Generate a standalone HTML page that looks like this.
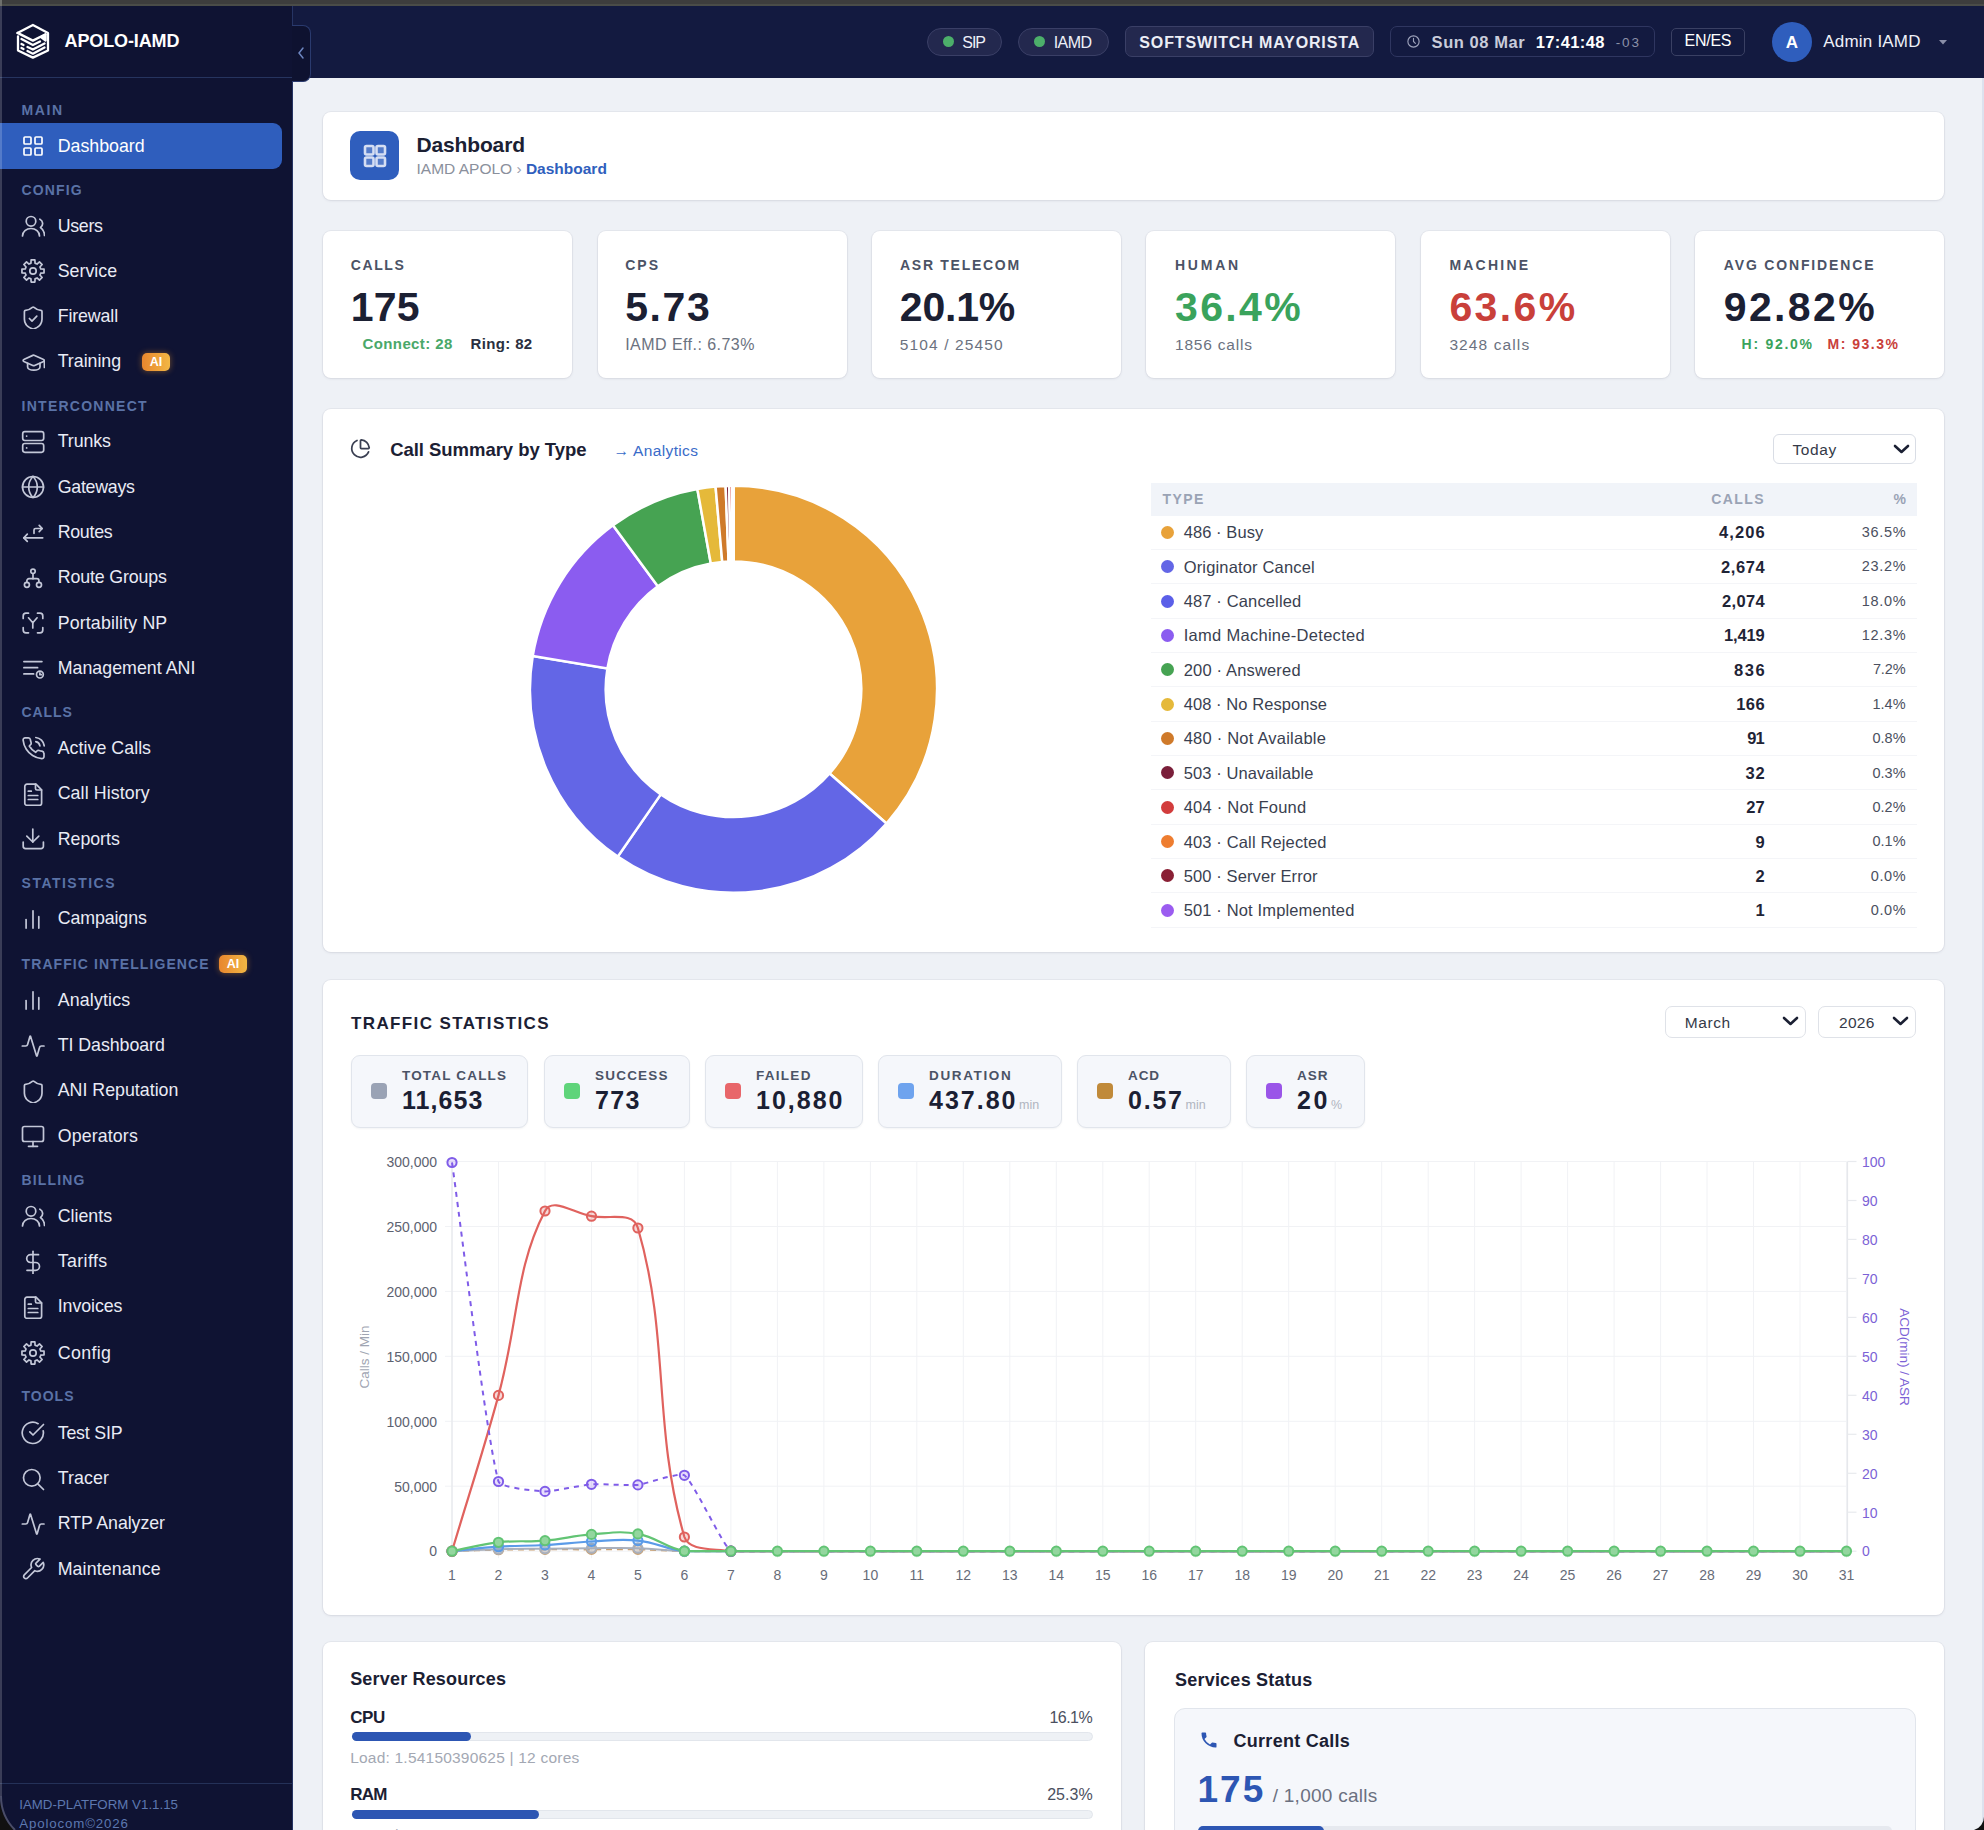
<!DOCTYPE html><html><head><meta charset="utf-8"><style>
*{margin:0;padding:0;box-sizing:border-box}
html,body{width:1984px;height:1830px;overflow:hidden;background:#eef1f6;font-family:"Liberation Sans",sans-serif}
.t{position:absolute;line-height:1;white-space:nowrap}
.r{position:absolute}
.card{position:absolute;background:#fff;border-radius:10px;box-shadow:0 1px 3px rgba(20,30,60,.08),0 0 0 1px rgba(20,30,60,.04)}
</style></head><body>

<div class="r" style="left:0px;top:0px;width:1984px;height:78px;background:#131a40"></div>
<div class="r" style="left:0px;top:0px;width:293px;height:1830px;background:#0f1333;border-right:1px solid #263463"></div>
<div class="r" style="left:0px;top:77px;width:292px;height:1px;background:#26345f"></div>
<svg class="r" style="left:12px;top:20px" width="42" height="42" viewBox="0 0 42 42" fill="none" stroke="#fff" stroke-width="2.3" stroke-linecap="round" stroke-linejoin="round"><path d="M5.5 12.9L20.9 5L36 12.9V30.5L20.9 37.6L6 30.5V16.5"/><path d="M5.5 12.9L20.9 20.6L33.5 14.2"/><path d="M9.5 19L20.9 25L28 21.5"/><path d="M15.5 27L20.9 29.5L32.5 23.5"/><path d="M15.5 31L20.9 33.7L32.5 27.5"/><path d="M9.5 24L11.5 25"/><path d="M9.5 28L11.5 29"/><path d="M29 17.2L33.6 14.6V20.6Z" fill="#fff"/></svg>
<div class="t" style="left:64.5px;top:32.0px;font-size:18px;font-weight:700;color:#ffffff;letter-spacing:-0.11px;">APOLO-IAMD</div>
<div class="r" style="left:292px;top:25px;width:19px;height:57px;background:#0e1230;border:1px solid #2a3a6e;border-left:none;border-radius:0 8px 8px 0"></div>
<svg class="r" style="left:296px;top:46px" width="10" height="14" viewBox="0 0 10 14" fill="none" stroke="#6d86c0" stroke-width="1.5" stroke-linecap="round"><path d="M7 2L3 7l4 5"/></svg>
<div class="t" style="left:21.6px;top:103.3px;font-size:14px;font-weight:700;color:#5a72a6;letter-spacing:1.54px;">MAIN</div>
<div class="r" style="left:0px;top:123px;width:282px;height:46px;background:#2f5ebd;border-radius:0 9px 9px 0"></div>
<svg class="r" style="left:21px;top:134px;" width="24" height="24" viewBox="0 0 24 24" fill="none" stroke="#ffffff" stroke-width="1.7" stroke-linecap="round" stroke-linejoin="round"><rect x="3" y="3" width="7" height="7" rx="1"/><rect x="14" y="3" width="7" height="7" rx="1"/><rect x="14" y="14" width="7" height="7" rx="1"/><rect x="3" y="14" width="7" height="7" rx="1"/></svg>
<div class="t" style="left:57.7px;top:137.7px;font-size:17.8px;font-weight:400;color:#ffffff;letter-spacing:-0.01px;">Dashboard</div>
<div class="t" style="left:21.6px;top:183.3px;font-size:14px;font-weight:700;color:#5a72a6;letter-spacing:1.11px;">CONFIG</div>
<svg class="r" style="left:21px;top:214px;" width="24" height="24" viewBox="0 0 24 24" fill="none" stroke="#c3c7d8" stroke-width="1.7" stroke-linecap="round" stroke-linejoin="round"><path d="M18.5 22a8.5 7.5 0 0 0-17 0"/><circle cx="10" cy="7.3" r="4.8"/><path d="M23.5 21.5c0-3.37-2-6.5-4-8a4.8 4.8 0 0 0-.6-8.3"/></svg>
<div class="t" style="left:57.7px;top:217.7px;font-size:17.8px;font-weight:400;color:#e9ebf5;letter-spacing:-0.30px;">Users</div>
<svg class="r" style="left:21px;top:259px;" width="24" height="24" viewBox="0 0 24 24" fill="none" stroke="#c3c7d8" stroke-width="1.7" stroke-linecap="round" stroke-linejoin="round"><path d="M8.94 4.61 L9.94 4.27 L10.11 0.96 L13.89 0.96 L14.06 4.27 L15.06 4.61 L16.01 5.08 L18.47 2.85 L21.15 5.53 L18.92 7.99 L19.39 8.94 L19.73 9.94 L23.04 10.11 L23.04 13.89 L19.73 14.06 L19.39 15.06 L18.92 16.01 L21.15 18.47 L18.47 21.15 L16.01 18.92 L15.06 19.39 L14.06 19.73 L13.89 23.04 L10.11 23.04 L9.94 19.73 L8.94 19.39 L7.99 18.92 L5.53 21.15 L2.85 18.47 L5.08 16.01 L4.61 15.06 L4.27 14.06 L0.96 13.89 L0.96 10.11 L4.27 9.94 L4.61 8.94 L5.08 7.99 L2.85 5.53 L5.53 2.85 L7.99 5.08Z"/><circle cx="12" cy="12" r="3.2"/></svg>
<div class="t" style="left:57.7px;top:262.7px;font-size:17.8px;font-weight:400;color:#e9ebf5;letter-spacing:0.02px;">Service</div>
<svg class="r" style="left:21px;top:304.5px;" width="24" height="24" viewBox="0 0 24 24" fill="none" stroke="#c3c7d8" stroke-width="1.7" stroke-linecap="round" stroke-linejoin="round"><path d="M21 14.2c0 5.5-3.85 8.25-8.43 9.85a1.1 1.1 0 0 1-.74-.01C7.25 22.45 3.4 19.7 3.4 14.2V6.5a1.1 1.1 0 0 1 1.1-1.1c2.2 0 4.95-1.32 6.86-3a1.29 1.29 0 0 1 1.67 0C14.96 4.1 17.7 5.4 19.9 5.4a1.1 1.1 0 0 1 1.1 1.1z"/><path d="M8.4 13.5l2.6 2.6 4.8-4.9"/></svg>
<div class="t" style="left:57.7px;top:308.2px;font-size:17.8px;font-weight:400;color:#e9ebf5;letter-spacing:-0.12px;">Firewall</div>
<svg class="r" style="left:21px;top:349.5px;" width="24" height="24" viewBox="0 0 24 24" fill="none" stroke="#c3c7d8" stroke-width="1.7" stroke-linecap="round" stroke-linejoin="round"><path d="M22.6 11.5a1 1 0 0 0-.02-1.9L13.6 5.4a2.2 2.2 0 0 0-1.8 0L2.8 9.5a1 1 0 0 0 0 1.9l9 4.1a2.2 2.2 0 0 0 1.8 0z"/><path d="M23.4 10.8v6.6"/><path d="M6.6 13.3v3.7a6.2 3.2 0 0 0 12.4 0v-3.7"/></svg>
<div class="t" style="left:57.7px;top:353.2px;font-size:17.8px;font-weight:400;color:#e9ebf5;letter-spacing:-0.02px;">Training</div>
<div class="r" style="left:142px;top:353px;width:28px;height:18px;border-radius:5px;background:linear-gradient(90deg,#e8862e,#f2b744);box-shadow:0 0 6px rgba(240,150,40,.45)"></div>
<div class="t" style="left:156.0px;top:356.0px;font-size:12.5px;font-weight:700;color:#ffffff;transform:translateX(-50%);">AI</div>
<div class="t" style="left:21.6px;top:399.3px;font-size:14px;font-weight:700;color:#5a72a6;letter-spacing:1.25px;">INTERCONNECT</div>
<svg class="r" style="left:21px;top:429.5px;" width="24" height="24" viewBox="0 0 24 24" fill="none" stroke="#c3c7d8" stroke-width="1.7" stroke-linecap="round" stroke-linejoin="round"><rect x="1.7" y="1.7" width="21" height="8.8" rx="2.2"/><rect x="1.7" y="13.5" width="21" height="8.8" rx="2.2"/><path d="M5.6 6.1h.1"/><path d="M5.6 17.9h.1"/></svg>
<div class="t" style="left:57.7px;top:433.2px;font-size:17.8px;font-weight:400;color:#e9ebf5;letter-spacing:-0.09px;">Trunks</div>
<svg class="r" style="left:21px;top:475px;" width="24" height="24" viewBox="0 0 24 24" fill="none" stroke="#c3c7d8" stroke-width="1.7" stroke-linecap="round" stroke-linejoin="round"><circle cx="12" cy="12" r="10.5"/><path d="M12 1.5a15 15 0 0 0 0 21a15 15 0 0 0 0-21"/><path d="M1.5 12h21"/></svg>
<div class="t" style="left:57.7px;top:478.7px;font-size:17.8px;font-weight:400;color:#e9ebf5;letter-spacing:-0.26px;">Gateways</div>
<svg class="r" style="left:21px;top:520px;" width="24" height="24" viewBox="0 0 24 24" fill="none" stroke="#c3c7d8" stroke-width="1.7" stroke-linecap="round" stroke-linejoin="round"><path d="M2.8 17.8h18.9"/><path d="M6.3 14.2l-3.5 3.6l3.5 3.6"/><path d="M13 13.3v-3.2a1.6 1.6 0 0 1 1.6-1.6h6.5"/><path d="M18.2 5.3l3 3.2l-3 3.2"/></svg>
<div class="t" style="left:57.7px;top:523.7px;font-size:17.8px;font-weight:400;color:#e9ebf5;letter-spacing:-0.28px;">Routes</div>
<svg class="r" style="left:21px;top:565.5px;" width="24" height="24" viewBox="0 0 24 24" fill="none" stroke="#c3c7d8" stroke-width="1.7" stroke-linecap="round" stroke-linejoin="round"><circle cx="12" cy="5.3" r="2.2"/><path d="M12 7.5v5.2"/><path d="M5.9 16.3v-1.6a2 2 0 0 1 2-2h8a2 2 0 0 1 2 2v1.6"/><circle cx="5.9" cy="18.8" r="2.5"/><circle cx="18" cy="18.8" r="2.5"/></svg>
<div class="t" style="left:57.7px;top:569.2px;font-size:17.8px;font-weight:400;color:#e9ebf5;letter-spacing:-0.14px;">Route Groups</div>
<svg class="r" style="left:21px;top:611px;" width="24" height="24" viewBox="0 0 24 24" fill="none" stroke="#c3c7d8" stroke-width="1.7" stroke-linecap="round" stroke-linejoin="round"><path d="M2.2 7.5V5a2.8 2.8 0 0 1 2.8-2.8h2.5"/><path d="M2.2 16.5V19A2.8 2.8 0 0 0 5 21.8h2.5"/><path d="M16.5 2.2H19A2.8 2.8 0 0 1 21.8 5v2.5"/><path d="M16.5 21.8H19a2.8 2.8 0 0 0 2.8-2.8v-2.5"/><path d="M7.5 6.8l4.3 5l4.3-5"/><path d="M11.8 11.8V17"/></svg>
<div class="t" style="left:57.7px;top:614.7px;font-size:17.8px;font-weight:400;color:#e9ebf5;letter-spacing:0.14px;">Portability NP</div>
<svg class="r" style="left:21px;top:656px;" width="24" height="24" viewBox="0 0 24 24" fill="none" stroke="#c3c7d8" stroke-width="1.7" stroke-linecap="round" stroke-linejoin="round"><path d="M2.9 5.6h18"/><path d="M2.9 11.7h13.7"/><path d="M2.9 17.9h9.7"/><circle cx="18.9" cy="18.6" r="3.4"/><path d="M18.9 16.9v1.8h1.4"/></svg>
<div class="t" style="left:57.7px;top:659.7px;font-size:17.8px;font-weight:400;color:#e9ebf5;letter-spacing:0.02px;">Management ANI</div>
<div class="t" style="left:21.6px;top:705.3px;font-size:14px;font-weight:700;color:#5a72a6;letter-spacing:0.88px;">CALLS</div>
<svg class="r" style="left:21px;top:736px;" width="24" height="24" viewBox="0 0 24 24" fill="none" stroke="#c3c7d8" stroke-width="1.7" stroke-linecap="round" stroke-linejoin="round"><path d="M23 17.5v3.1a2.1 2.1 0 0 1-2.3 2.1a20.8 20.8 0 0 1-9.1-3.2a20.5 20.5 0 0 1-6.3-6.3A20.8 20.8 0 0 1 2.1 4.1A2.1 2.1 0 0 1 4.2 1.8h3.1a2.1 2.1 0 0 1 2.1 1.8c.1 1 .4 2 .7 2.9a2.1 2.1 0 0 1-.5 2.2L8.3 10a16.8 16.8 0 0 0 6.3 6.3l1.3-1.3a2.1 2.1 0 0 1 2.2-.5c.9.3 1.9.6 2.9.7a2.1 2.1 0 0 1 1.8 2.1z"/><path d="M14.8 1.5a9.5 9.5 0 0 1 8.4 8.3"/><path d="M14.8 5.7a5.2 5.2 0 0 1 4.1 4.1"/></svg>
<div class="t" style="left:57.7px;top:739.7px;font-size:17.8px;font-weight:400;color:#e9ebf5;letter-spacing:0.04px;">Active Calls</div>
<svg class="r" style="left:21px;top:781.5px;" width="24" height="24" viewBox="0 0 24 24" fill="none" stroke="#c3c7d8" stroke-width="1.7" stroke-linecap="round" stroke-linejoin="round"><path d="M15 2.2H6a2.2 2.2 0 0 0-2.2 2.2v16.8A2.2 2.2 0 0 0 6 23.4h12.4a2.2 2.2 0 0 0 2.2-2.2V7.8z"/><path d="M14.5 2.2v4.3a1.5 1.5 0 0 0 1.5 1.5h4.5"/><path d="M7.3 9.2h3"/><path d="M7.3 13.5h9.5"/><path d="M7.3 17.5h9.5"/></svg>
<div class="t" style="left:57.7px;top:785.2px;font-size:17.8px;font-weight:400;color:#e9ebf5;letter-spacing:0.09px;">Call History</div>
<svg class="r" style="left:21px;top:827px;" width="24" height="24" viewBox="0 0 24 24" fill="none" stroke="#c3c7d8" stroke-width="1.7" stroke-linecap="round" stroke-linejoin="round"><path d="M2.2 15v4.3a2.3 2.3 0 0 0 2.3 2.3h15.6a2.3 2.3 0 0 0 2.3-2.3V15"/><path d="M5.8 9.2l6 5.8l6-5.8"/><path d="M11.8 15V2"/></svg>
<div class="t" style="left:57.7px;top:830.7px;font-size:17.8px;font-weight:400;color:#e9ebf5;letter-spacing:-0.02px;">Reports</div>
<div class="t" style="left:21.6px;top:876.3px;font-size:14px;font-weight:700;color:#5a72a6;letter-spacing:1.48px;">STATISTICS</div>
<svg class="r" style="left:21px;top:906.5px;" width="24" height="24" viewBox="0 0 24 24" fill="none" stroke="#c3c7d8" stroke-width="1.7" stroke-linecap="round" stroke-linejoin="round"><path d="M17.8 21.1V9.7"/><path d="M12 21.1V3.8"/><path d="M5.1 21.1v-8.6"/></svg>
<div class="t" style="left:57.7px;top:910.2px;font-size:17.8px;font-weight:400;color:#e9ebf5;letter-spacing:-0.10px;">Campaigns</div>
<div class="t" style="left:21.6px;top:957.3px;font-size:14px;font-weight:700;color:#5a72a6;letter-spacing:1.08px;">TRAFFIC INTELLIGENCE</div>
<div class="r" style="left:219px;top:955px;width:28px;height:18px;border-radius:5px;background:linear-gradient(90deg,#e8862e,#f2b744);box-shadow:0 0 6px rgba(240,150,40,.45)"></div>
<div class="t" style="left:233.0px;top:958.0px;font-size:12.5px;font-weight:700;color:#ffffff;transform:translateX(-50%);">AI</div>
<svg class="r" style="left:21px;top:988px;" width="24" height="24" viewBox="0 0 24 24" fill="none" stroke="#c3c7d8" stroke-width="1.7" stroke-linecap="round" stroke-linejoin="round"><path d="M17.8 21.1V9.7"/><path d="M12 21.1V3.8"/><path d="M5.1 21.1v-8.6"/></svg>
<div class="t" style="left:57.7px;top:991.7px;font-size:17.8px;font-weight:400;color:#e9ebf5;letter-spacing:0.16px;">Analytics</div>
<svg class="r" style="left:21px;top:1033.5px;" width="24" height="24" viewBox="0 0 24 24" fill="none" stroke="#c3c7d8" stroke-width="1.7" stroke-linecap="round" stroke-linejoin="round"><path d="M23 12h-2.6a2 2 0 0 0-1.9 1.5l-2.4 8.4a.3.3 0 0 1-.5 0L9.5 2.2a.3.3 0 0 0-.5 0L6.6 10.5A2 2 0 0 1 4.6 12H1.3"/></svg>
<div class="t" style="left:57.7px;top:1037.2px;font-size:17.8px;font-weight:400;color:#e9ebf5;letter-spacing:-0.05px;">TI Dashboard</div>
<svg class="r" style="left:21px;top:1078.5px;" width="24" height="24" viewBox="0 0 24 24" fill="none" stroke="#c3c7d8" stroke-width="1.7" stroke-linecap="round" stroke-linejoin="round"><path d="M21 14.2c0 5.5-3.85 8.25-8.43 9.85a1.1 1.1 0 0 1-.74-.01C7.25 22.45 3.4 19.7 3.4 14.2V6.5a1.1 1.1 0 0 1 1.1-1.1c2.2 0 4.95-1.32 6.86-3a1.29 1.29 0 0 1 1.67 0C14.96 4.1 17.7 5.4 19.9 5.4a1.1 1.1 0 0 1 1.1 1.1z"/></svg>
<div class="t" style="left:57.7px;top:1082.2px;font-size:17.8px;font-weight:400;color:#e9ebf5;letter-spacing:0.01px;">ANI Reputation</div>
<svg class="r" style="left:21px;top:1124px;" width="24" height="24" viewBox="0 0 24 24" fill="none" stroke="#c3c7d8" stroke-width="1.7" stroke-linecap="round" stroke-linejoin="round"><rect x="1.5" y="2.5" width="21" height="15" rx="2"/><path d="M7.5 22.3h9"/><path d="M12 17.5v4.8"/></svg>
<div class="t" style="left:57.7px;top:1127.7px;font-size:17.8px;font-weight:400;color:#e9ebf5;letter-spacing:0.13px;">Operators</div>
<div class="t" style="left:21.6px;top:1173.3px;font-size:14px;font-weight:700;color:#5a72a6;letter-spacing:1.13px;">BILLING</div>
<svg class="r" style="left:21px;top:1204px;" width="24" height="24" viewBox="0 0 24 24" fill="none" stroke="#c3c7d8" stroke-width="1.7" stroke-linecap="round" stroke-linejoin="round"><path d="M18.5 22a8.5 7.5 0 0 0-17 0"/><circle cx="10" cy="7.3" r="4.8"/><path d="M23.5 21.5c0-3.37-2-6.5-4-8a4.8 4.8 0 0 0-.6-8.3"/></svg>
<div class="t" style="left:57.7px;top:1207.7px;font-size:17.8px;font-weight:400;color:#e9ebf5;letter-spacing:-0.00px;">Clients</div>
<svg class="r" style="left:21px;top:1249.5px;" width="24" height="24" viewBox="0 0 24 24" fill="none" stroke="#c3c7d8" stroke-width="1.7" stroke-linecap="round" stroke-linejoin="round"><path d="M12 1.3v22.4"/><path d="M17.5 4.7H9.6a3.9 3.9 0 0 0 0 7.8h5a3.9 3.9 0 0 1 0 7.8H6"/></svg>
<div class="t" style="left:57.7px;top:1253.2px;font-size:17.8px;font-weight:400;color:#e9ebf5;letter-spacing:0.41px;">Tariffs</div>
<svg class="r" style="left:21px;top:1294.5px;" width="24" height="24" viewBox="0 0 24 24" fill="none" stroke="#c3c7d8" stroke-width="1.7" stroke-linecap="round" stroke-linejoin="round"><path d="M15 2.2H6a2.2 2.2 0 0 0-2.2 2.2v16.8A2.2 2.2 0 0 0 6 23.4h12.4a2.2 2.2 0 0 0 2.2-2.2V7.8z"/><path d="M14.5 2.2v4.3a1.5 1.5 0 0 0 1.5 1.5h4.5"/><path d="M7.3 9.2h3"/><path d="M7.3 13.5h9.5"/><path d="M7.3 17.5h9.5"/></svg>
<div class="t" style="left:57.7px;top:1298.2px;font-size:17.8px;font-weight:400;color:#e9ebf5;letter-spacing:-0.06px;">Invoices</div>
<svg class="r" style="left:21px;top:1341px;" width="24" height="24" viewBox="0 0 24 24" fill="none" stroke="#c3c7d8" stroke-width="1.7" stroke-linecap="round" stroke-linejoin="round"><path d="M8.94 4.61 L9.94 4.27 L10.11 0.96 L13.89 0.96 L14.06 4.27 L15.06 4.61 L16.01 5.08 L18.47 2.85 L21.15 5.53 L18.92 7.99 L19.39 8.94 L19.73 9.94 L23.04 10.11 L23.04 13.89 L19.73 14.06 L19.39 15.06 L18.92 16.01 L21.15 18.47 L18.47 21.15 L16.01 18.92 L15.06 19.39 L14.06 19.73 L13.89 23.04 L10.11 23.04 L9.94 19.73 L8.94 19.39 L7.99 18.92 L5.53 21.15 L2.85 18.47 L5.08 16.01 L4.61 15.06 L4.27 14.06 L0.96 13.89 L0.96 10.11 L4.27 9.94 L4.61 8.94 L5.08 7.99 L2.85 5.53 L5.53 2.85 L7.99 5.08Z"/><circle cx="12" cy="12" r="3.2"/></svg>
<div class="t" style="left:57.7px;top:1344.7px;font-size:17.8px;font-weight:400;color:#e9ebf5;letter-spacing:0.37px;">Config</div>
<div class="t" style="left:21.6px;top:1389.3px;font-size:14px;font-weight:700;color:#5a72a6;letter-spacing:0.98px;">TOOLS</div>
<svg class="r" style="left:21px;top:1421px;" width="24" height="24" viewBox="0 0 24 24" fill="none" stroke="#c3c7d8" stroke-width="1.7" stroke-linecap="round" stroke-linejoin="round"><path d="M22.2 9.8A10.6 10.6 0 1 1 17.1 2.7"/><path d="M8.8 10.8l3.2 3.2L22.5 3.5"/></svg>
<div class="t" style="left:57.7px;top:1424.7px;font-size:17.8px;font-weight:400;color:#e9ebf5;letter-spacing:-0.18px;">Test SIP</div>
<svg class="r" style="left:21px;top:1466.5px;" width="24" height="24" viewBox="0 0 24 24" fill="none" stroke="#c3c7d8" stroke-width="1.7" stroke-linecap="round" stroke-linejoin="round"><circle cx="10.8" cy="10.8" r="8.3"/><path d="M22.5 22.5l-5.2-5.2"/></svg>
<div class="t" style="left:57.7px;top:1470.2px;font-size:17.8px;font-weight:400;color:#e9ebf5;letter-spacing:0.11px;">Tracer</div>
<svg class="r" style="left:21px;top:1511.5px;" width="24" height="24" viewBox="0 0 24 24" fill="none" stroke="#c3c7d8" stroke-width="1.7" stroke-linecap="round" stroke-linejoin="round"><path d="M23 12h-2.6a2 2 0 0 0-1.9 1.5l-2.4 8.4a.3.3 0 0 1-.5 0L9.5 2.2a.3.3 0 0 0-.5 0L6.6 10.5A2 2 0 0 1 4.6 12H1.3"/></svg>
<div class="t" style="left:57.7px;top:1515.2px;font-size:17.8px;font-weight:400;color:#e9ebf5;letter-spacing:-0.07px;">RTP Analyzer</div>
<svg class="r" style="left:21px;top:1557px;" width="24" height="24" viewBox="0 0 24 24" fill="none" stroke="#c3c7d8" stroke-width="1.7" stroke-linecap="round" stroke-linejoin="round"><path d="M15 6.1a1 1 0 0 0 0 1.5l1.7 1.7a1 1 0 0 0 1.5 0l4-4a6.4 6.4 0 0 1-8.4 8.4l-7.3 7.3a2.25 2.25 0 0 1-3.2-3.2l7.3-7.3a6.4 6.4 0 0 1 8.4-8.4z"/></svg>
<div class="t" style="left:57.7px;top:1560.7px;font-size:17.8px;font-weight:400;color:#e9ebf5;letter-spacing:0.11px;">Maintenance</div>
<div class="r" style="left:0px;top:1783px;width:292px;height:1px;background:#243158"></div>
<div class="t" style="left:19.2px;top:1797.5px;font-size:13.3px;font-weight:400;color:#5d78b0;letter-spacing:0.01px;">IAMD-PLATFORM V1.1.15</div>
<div class="t" style="left:19.2px;top:1817.2px;font-size:13.3px;font-weight:400;color:#5d78b0;letter-spacing:0.86px;">Apolocom©2026</div>
<div class="r" style="left:927px;top:28px;width:75px;height:28px;background:#23284e;border:1px solid #3a3f66;border-radius:14px"></div>
<div class="r" style="left:943px;top:36px;width:11px;height:11px;border-radius:50%;background:#4caf6a"></div>
<div class="t" style="left:962.3px;top:35.0px;font-size:16px;font-weight:400;color:#eef0f8;letter-spacing:-1.04px;">SIP</div>
<div class="r" style="left:1018px;top:28px;width:91px;height:28px;background:#23284e;border:1px solid #3a3f66;border-radius:14px"></div>
<div class="r" style="left:1034px;top:36px;width:11px;height:11px;border-radius:50%;background:#4caf6a"></div>
<div class="t" style="left:1053.7px;top:35.0px;font-size:16px;font-weight:400;color:#eef0f8;letter-spacing:-0.57px;">IAMD</div>
<div class="r" style="left:1125px;top:26px;width:249px;height:31px;background:#23284e;border:1px solid #3a3f66;border-radius:7px"></div>
<div class="t" style="left:1139.3px;top:34.9px;font-size:16px;font-weight:700;color:#eceef6;letter-spacing:0.86px;">SOFTSWITCH MAYORISTA</div>
<div class="r" style="left:1390px;top:26px;width:265px;height:31px;border:1px solid #2f3660;border-radius:7px"></div>
<svg class="r" style="left:1406px;top:34px;" width="15" height="15" viewBox="0 0 24 24" fill="none" stroke="#9ea3bb" stroke-width="1.8" stroke-linecap="round" stroke-linejoin="round"><circle cx="12" cy="12" r="9"/><path d="M12 7v5l3 3"/></svg>
<div class="t" style="left:1431.6px;top:34.2px;font-size:16.5px;font-weight:700;color:#c9ccda;letter-spacing:0.56px;">Sun 08 Mar</div>
<div class="t" style="left:1535.7px;top:34.2px;font-size:16.5px;font-weight:700;color:#ffffff;letter-spacing:0.38px;">17:41:48</div>
<div class="t" style="left:1615.7px;top:36.4px;font-size:13.5px;font-weight:400;color:#8c91a8;letter-spacing:1.89px;">-03</div>
<div class="r" style="left:1671px;top:28px;width:74px;height:28px;border:1px solid #3a4063;border-radius:5px"></div>
<div class="t" style="left:1684.5px;top:33.3px;font-size:16px;font-weight:400;color:#ffffff;letter-spacing:-0.25px;">EN/ES</div>
<div class="r" style="left:1772px;top:22px;width:40px;height:40px;border-radius:50%;background:#2f5ebd"></div>
<div class="t" style="left:1792.0px;top:34.1px;font-size:17px;font-weight:700;color:#ffffff;transform:translateX(-50%);">A</div>
<div class="t" style="left:1823.3px;top:33.3px;font-size:17px;font-weight:400;color:#eef0f8;letter-spacing:0.20px;">Admin IAMD</div>
<svg class="r" style="left:1939px;top:40px" width="8" height="5" viewBox="0 0 8 5"><path d="M0 0h8L4 4.5z" fill="#8a8fa8"/></svg>
<div class="card" style="left:323px;top:112px;width:1621px;height:88px;border-radius:8px;"></div>
<div class="r" style="left:350px;top:131px;width:49px;height:49px;border-radius:10px;background:#2f5ebd"></div>
<svg class="r" style="left:362.5px;top:143.5px;fill:rgba(255,255,255,.18)" width="24" height="24" viewBox="0 0 24 24" fill="none" stroke="#d5def3" stroke-width="2.6" stroke-linecap="round" stroke-linejoin="round"><rect x="2" y="2" width="8.5" height="8.5" rx="1.5"/><rect x="13.5" y="2" width="8.5" height="8.5" rx="1.5"/><rect x="2" y="13.5" width="8.5" height="8.5" rx="1.5"/><rect x="13.5" y="13.5" width="8.5" height="8.5" rx="1.5"/></svg>
<div class="t" style="left:416.5px;top:133.6px;font-size:21px;font-weight:700;color:#1b2033;letter-spacing:-0.15px;">Dashboard</div>
<div class="t" style="left:416.5px;top:161.4px;font-size:15.5px;font-weight:400;color:#8a909c;">IAMD APOLO <span style="color:#9aa0ad">›</span> <span style="color:#2f5ebd;font-weight:700">Dashboard</span></div>
<div class="card" style="left:323px;top:231px;width:249px;height:147px;border-radius:8px;"></div>
<div class="card" style="left:598px;top:231px;width:249px;height:147px;border-radius:8px;"></div>
<div class="card" style="left:872px;top:231px;width:249px;height:147px;border-radius:8px;"></div>
<div class="card" style="left:1146px;top:231px;width:249px;height:147px;border-radius:8px;"></div>
<div class="card" style="left:1421px;top:231px;width:249px;height:147px;border-radius:8px;"></div>
<div class="card" style="left:1695px;top:231px;width:249px;height:147px;border-radius:8px;"></div>
<div class="t" style="left:350.8px;top:258.3px;font-size:14px;font-weight:700;color:#4b5366;letter-spacing:1.58px;">CALLS</div>
<div class="t" style="left:350.8px;top:287.3px;font-size:41px;font-weight:700;color:#1b2033;letter-spacing:0.15px;">175</div>
<div class="t" style="left:362.5px;top:336.3px;font-size:15px;font-weight:700;color:#4aa86a;letter-spacing:0.39px;">Connect: 28</div>
<div class="t" style="left:470.5px;top:336.3px;font-size:15px;font-weight:700;color:#2a2f40;letter-spacing:0.36px;">Ring: 82</div>
<div class="t" style="left:625.2px;top:258.3px;font-size:14px;font-weight:700;color:#4b5366;letter-spacing:2.06px;">CPS</div>
<div class="t" style="left:625.2px;top:287.3px;font-size:41px;font-weight:700;color:#1b2033;letter-spacing:1.57px;">5.73</div>
<div class="t" style="left:625.2px;top:336.8px;font-size:16px;font-weight:400;color:#6b7280;letter-spacing:0.45px;">IAMD Eff.: 6.73%</div>
<div class="t" style="left:900.0px;top:258.3px;font-size:14px;font-weight:700;color:#4b5366;letter-spacing:1.72px;">ASR TELECOM</div>
<div class="t" style="left:899.8px;top:287.3px;font-size:41px;font-weight:700;color:#1b2033;letter-spacing:-0.19px;">20.1%</div>
<div class="t" style="left:899.8px;top:337.2px;font-size:15.5px;font-weight:400;color:#6b7280;letter-spacing:1.13px;">5104 / 25450</div>
<div class="t" style="left:1175.0px;top:258.3px;font-size:14px;font-weight:700;color:#4b5366;letter-spacing:2.75px;">HUMAN</div>
<div class="t" style="left:1175.0px;top:287.3px;font-size:41px;font-weight:700;color:#3aa35c;letter-spacing:2.36px;">36.4%</div>
<div class="t" style="left:1175.0px;top:337.2px;font-size:15.5px;font-weight:400;color:#6b7280;letter-spacing:0.80px;">1856 calls</div>
<div class="t" style="left:1449.4px;top:258.3px;font-size:14px;font-weight:700;color:#4b5366;letter-spacing:2.23px;">MACHINE</div>
<div class="t" style="left:1449.4px;top:287.3px;font-size:41px;font-weight:700;color:#c9403a;letter-spacing:2.39px;">63.6%</div>
<div class="t" style="left:1449.4px;top:337.2px;font-size:15.5px;font-weight:400;color:#6b7280;letter-spacing:1.11px;">3248 calls</div>
<div class="t" style="left:1723.8px;top:258.3px;font-size:14px;font-weight:700;color:#4b5366;letter-spacing:1.84px;">AVG CONFIDENCE</div>
<div class="t" style="left:1723.8px;top:287.3px;font-size:41px;font-weight:700;color:#1b2033;letter-spacing:2.35px;">92.82%</div>
<div class="t" style="left:1741.6px;top:337.1px;font-size:14px;font-weight:700;color:#3aa35c;letter-spacing:1.72px;">H: 92.0%</div>
<div class="t" style="left:1827.5px;top:337.1px;font-size:14px;font-weight:700;color:#c9403a;letter-spacing:1.51px;">M: 93.3%</div>
<div class="card" style="left:323px;top:409px;width:1621px;height:543px;border-radius:8px;"></div>
<svg class="r" style="left:350px;top:438px;" width="21" height="21" viewBox="0 0 24 24" fill="none" stroke="#3a3f52" stroke-width="2" stroke-linecap="round" stroke-linejoin="round"><path d="M21 12c.552 0 1.005-.449.95-.998a10 10 0 0 0-8.953-8.951c-.55-.055-.998.398-.998.95v8a1 1 0 0 0 1 1z"/><path d="M21.21 15.89A10 10 0 1 1 8 2.83"/></svg>
<div class="t" style="left:390.2px;top:440.9px;font-size:18.5px;font-weight:700;color:#1b2033;letter-spacing:-0.04px;">Call Summary by Type</div>
<div class="t" style="left:613.4px;top:443.2px;font-size:15.5px;font-weight:400;color:#3a6bc9;letter-spacing:0.36px;">→ Analytics</div>
<svg class="r" style="left:0;top:0" width="1984" height="1830" viewBox="0 0 1984 1830"><path d="M733.50 485.80A203.5 203.5 0 0 1 886.51 823.46L829.59 773.55A127.8 127.8 0 0 0 733.50 561.50Z" fill="#e8a23a" stroke="#fff" stroke-width="2.5"/><path d="M886.51 823.46A203.5 203.5 0 0 1 617.70 856.64L660.78 794.39A127.8 127.8 0 0 0 829.59 773.55Z" fill="#6366e6" stroke="#fff" stroke-width="2.5"/><path d="M617.70 856.64A203.5 203.5 0 0 1 532.73 656.06L607.42 668.43A127.8 127.8 0 0 0 660.78 794.39Z" fill="#6366e6" stroke="#fff" stroke-width="2.5"/><path d="M532.73 656.06A203.5 203.5 0 0 1 612.96 525.34L657.80 586.33A127.8 127.8 0 0 0 607.42 668.43Z" fill="#8b5cf0" stroke="#fff" stroke-width="2.5"/><path d="M612.96 525.34A203.5 203.5 0 0 1 697.34 489.04L710.79 563.53A127.8 127.8 0 0 0 657.80 586.33Z" fill="#46a352" stroke="#fff" stroke-width="2.5"/><path d="M697.34 489.04A203.5 203.5 0 0 1 715.57 486.59L722.24 562.00A127.8 127.8 0 0 0 710.79 563.53Z" fill="#e5b93a" stroke="#fff" stroke-width="2.5"/><path d="M715.57 486.59A203.5 203.5 0 0 1 725.63 485.95L728.56 561.60A127.8 127.8 0 0 0 722.24 562.00Z" fill="#cf7a2a" stroke="#fff" stroke-width="2.5"/><path d="M725.63 485.95A203.5 203.5 0 0 1 729.18 485.85L730.79 561.53A127.8 127.8 0 0 0 728.56 561.60Z" fill="#7a1f3a" stroke="#fff" stroke-width="2.5"/><path d="M729.18 485.85A203.5 203.5 0 0 1 732.17 485.80L732.66 561.50A127.8 127.8 0 0 0 730.79 561.53Z" fill="#d23c3c" stroke="#fff" stroke-width="2.5"/><path d="M732.17 485.80A203.5 203.5 0 0 1 733.17 485.80L733.29 561.50A127.8 127.8 0 0 0 732.66 561.50Z" fill="#ee7d30" stroke="#fff" stroke-width="2.5"/><path d="M733.17 485.80A203.5 203.5 0 0 1 733.39 485.80L733.43 561.50A127.8 127.8 0 0 0 733.29 561.50Z" fill="#8a2035" stroke="#fff" stroke-width="2.5"/><path d="M733.39 485.80A203.5 203.5 0 0 1 733.50 485.80L733.50 561.50A127.8 127.8 0 0 0 733.43 561.50Z" fill="#9b5cf0" stroke="#fff" stroke-width="2.5"/></svg>
<div class="r" style="left:1773px;top:434px;width:143px;height:30px;border:1px solid #d9dde5;border-radius:6px;background:#fff"></div>
<div class="t" style="left:1792.5px;top:441.9px;font-size:15.5px;font-weight:400;color:#353a48;letter-spacing:0.58px;">Today</div>
<svg class="r" style="left:1893px;top:443px" width="17" height="12" viewBox="0 0 17 12" fill="none" stroke="#1b2033" stroke-width="2.6" stroke-linecap="round" stroke-linejoin="round"><path d="M2 3l6.5 6 6.5-6"/></svg>
<div class="r" style="left:1151px;top:483px;width:766px;height:33px;background:#f1f4f9"></div>
<div class="t" style="left:1162.5px;top:491.8px;font-size:14px;font-weight:700;color:#9aa3b5;letter-spacing:1.40px;">TYPE</div>
<div class="t" style="left:1765.0px;top:491.8px;font-size:14px;font-weight:700;color:#9aa3b5;letter-spacing:1.40px;transform:translateX(-100%);">CALLS</div>
<div class="t" style="left:1906.0px;top:491.8px;font-size:14px;font-weight:700;color:#9aa3b5;transform:translateX(-100%);">%</div>
<div class="r" style="left:1161px;top:525.8px;width:13px;height:13px;border-radius:50%;background:#e8a23a"></div>
<div class="t" style="left:1183.7px;top:524.3px;font-size:16.5px;font-weight:400;color:#3a3f50;letter-spacing:0.08px;">486 · Busy</div>
<div class="t" style="left:1765.8px;top:524.3px;font-size:16.5px;font-weight:700;color:#1f2436;letter-spacing:1.10px;transform:translateX(-100%);">4,206</div>
<div class="t" style="left:1906.2px;top:525.0px;font-size:14.5px;font-weight:400;color:#4b5060;letter-spacing:0.65px;transform:translateX(-100%);">36.5%</div>
<div class="r" style="left:1151px;top:549px;width:766px;height:1px;background:#f4f5f8"></div>
<div class="r" style="left:1161px;top:560.1px;width:13px;height:13px;border-radius:50%;background:#6366e6"></div>
<div class="t" style="left:1183.7px;top:558.7px;font-size:16.5px;font-weight:400;color:#3a3f50;letter-spacing:0.16px;">Originator Cancel</div>
<div class="t" style="left:1765.3px;top:558.7px;font-size:16.5px;font-weight:700;color:#1f2436;letter-spacing:0.60px;transform:translateX(-100%);">2,674</div>
<div class="t" style="left:1906.2px;top:559.4px;font-size:14.5px;font-weight:400;color:#4b5060;letter-spacing:0.65px;transform:translateX(-100%);">23.2%</div>
<div class="r" style="left:1151px;top:583px;width:766px;height:1px;background:#f4f5f8"></div>
<div class="r" style="left:1161px;top:594.5px;width:13px;height:13px;border-radius:50%;background:#5b5fe8"></div>
<div class="t" style="left:1183.7px;top:593.0px;font-size:16.5px;font-weight:400;color:#3a3f50;letter-spacing:0.14px;">487 · Cancelled</div>
<div class="t" style="left:1765.1px;top:593.0px;font-size:16.5px;font-weight:700;color:#1f2436;letter-spacing:0.38px;transform:translateX(-100%);">2,074</div>
<div class="t" style="left:1906.2px;top:593.7px;font-size:14.5px;font-weight:400;color:#4b5060;letter-spacing:0.65px;transform:translateX(-100%);">18.0%</div>
<div class="r" style="left:1151px;top:618px;width:766px;height:1px;background:#f4f5f8"></div>
<div class="r" style="left:1161px;top:628.8px;width:13px;height:13px;border-radius:50%;background:#8b5cf0"></div>
<div class="t" style="left:1183.7px;top:627.4px;font-size:16.5px;font-weight:400;color:#3a3f50;letter-spacing:0.29px;">Iamd Machine-Detected</div>
<div class="t" style="left:1764.6px;top:627.4px;font-size:16.5px;font-weight:700;color:#1f2436;letter-spacing:-0.12px;transform:translateX(-100%);">1,419</div>
<div class="t" style="left:1906.2px;top:628.1px;font-size:14.5px;font-weight:400;color:#4b5060;letter-spacing:0.65px;transform:translateX(-100%);">12.3%</div>
<div class="r" style="left:1151px;top:652px;width:766px;height:1px;background:#f4f5f8"></div>
<div class="r" style="left:1161px;top:663.2px;width:13px;height:13px;border-radius:50%;background:#46a352"></div>
<div class="t" style="left:1183.7px;top:661.7px;font-size:16.5px;font-weight:400;color:#3a3f50;letter-spacing:0.17px;">200 · Answered</div>
<div class="t" style="left:1766.2px;top:661.7px;font-size:16.5px;font-weight:700;color:#1f2436;letter-spacing:1.54px;transform:translateX(-100%);">836</div>
<div class="t" style="left:1905.4px;top:662.4px;font-size:14.5px;font-weight:400;color:#4b5060;letter-spacing:-0.15px;transform:translateX(-100%);">7.2%</div>
<div class="r" style="left:1151px;top:686px;width:766px;height:1px;background:#f4f5f8"></div>
<div class="r" style="left:1161px;top:697.5px;width:13px;height:13px;border-radius:50%;background:#e5b93a"></div>
<div class="t" style="left:1183.7px;top:696.1px;font-size:16.5px;font-weight:400;color:#3a3f50;letter-spacing:0.07px;">408 · No Response</div>
<div class="t" style="left:1765.2px;top:696.1px;font-size:16.5px;font-weight:700;color:#1f2436;letter-spacing:0.49px;transform:translateX(-100%);">166</div>
<div class="t" style="left:1905.6px;top:696.8px;font-size:14.5px;font-weight:400;color:#4b5060;transform:translateX(-100%);">1.4%</div>
<div class="r" style="left:1151px;top:721px;width:766px;height:1px;background:#f4f5f8"></div>
<div class="r" style="left:1161px;top:731.9px;width:13px;height:13px;border-radius:50%;background:#cf7a2a"></div>
<div class="t" style="left:1183.7px;top:730.4px;font-size:16.5px;font-weight:400;color:#3a3f50;letter-spacing:0.22px;">480 · Not Available</div>
<div class="t" style="left:1763.8px;top:730.4px;font-size:16.5px;font-weight:700;color:#1f2436;letter-spacing:-0.85px;transform:translateX(-100%);">91</div>
<div class="t" style="left:1905.6px;top:731.1px;font-size:14.5px;font-weight:400;color:#4b5060;transform:translateX(-100%);">0.8%</div>
<div class="r" style="left:1151px;top:755px;width:766px;height:1px;background:#f4f5f8"></div>
<div class="r" style="left:1161px;top:766.2px;width:13px;height:13px;border-radius:50%;background:#7a1f3a"></div>
<div class="t" style="left:1183.7px;top:764.8px;font-size:16.5px;font-weight:400;color:#3a3f50;letter-spacing:0.09px;">503 · Unavailable</div>
<div class="t" style="left:1765.5px;top:764.8px;font-size:16.5px;font-weight:700;color:#1f2436;letter-spacing:0.85px;transform:translateX(-100%);">32</div>
<div class="t" style="left:1905.6px;top:765.5px;font-size:14.5px;font-weight:400;color:#4b5060;transform:translateX(-100%);">0.3%</div>
<div class="r" style="left:1151px;top:789px;width:766px;height:1px;background:#f4f5f8"></div>
<div class="r" style="left:1161px;top:800.6px;width:13px;height:13px;border-radius:50%;background:#d23c3c"></div>
<div class="t" style="left:1183.7px;top:799.1px;font-size:16.5px;font-weight:400;color:#3a3f50;letter-spacing:0.23px;">404 · Not Found</div>
<div class="t" style="left:1764.6px;top:799.1px;font-size:16.5px;font-weight:700;color:#1f2436;letter-spacing:-0.05px;transform:translateX(-100%);">27</div>
<div class="t" style="left:1905.6px;top:799.8px;font-size:14.5px;font-weight:400;color:#4b5060;transform:translateX(-100%);">0.2%</div>
<div class="r" style="left:1151px;top:824px;width:766px;height:1px;background:#f4f5f8"></div>
<div class="r" style="left:1161px;top:835.0px;width:13px;height:13px;border-radius:50%;background:#ee7d30"></div>
<div class="t" style="left:1183.7px;top:833.5px;font-size:16.5px;font-weight:400;color:#3a3f50;letter-spacing:0.14px;">403 · Call Rejected</div>
<div class="t" style="left:1764.7px;top:833.5px;font-size:16.5px;font-weight:700;color:#1f2436;transform:translateX(-100%);">9</div>
<div class="t" style="left:1905.6px;top:834.2px;font-size:14.5px;font-weight:400;color:#4b5060;transform:translateX(-100%);">0.1%</div>
<div class="r" style="left:1151px;top:858px;width:766px;height:1px;background:#f4f5f8"></div>
<div class="r" style="left:1161px;top:869.3px;width:13px;height:13px;border-radius:50%;background:#8a2035"></div>
<div class="t" style="left:1183.7px;top:867.8px;font-size:16.5px;font-weight:400;color:#3a3f50;letter-spacing:0.11px;">500 · Server Error</div>
<div class="t" style="left:1764.7px;top:867.8px;font-size:16.5px;font-weight:700;color:#1f2436;transform:translateX(-100%);">2</div>
<div class="t" style="left:1906.1px;top:868.5px;font-size:14.5px;font-weight:400;color:#4b5060;letter-spacing:0.55px;transform:translateX(-100%);">0.0%</div>
<div class="r" style="left:1151px;top:892px;width:766px;height:1px;background:#f4f5f8"></div>
<div class="r" style="left:1161px;top:903.6px;width:13px;height:13px;border-radius:50%;background:#9b5cf0"></div>
<div class="t" style="left:1183.7px;top:902.2px;font-size:16.5px;font-weight:400;color:#3a3f50;letter-spacing:0.14px;">501 · Not Implemented</div>
<div class="t" style="left:1764.7px;top:902.2px;font-size:16.5px;font-weight:700;color:#1f2436;transform:translateX(-100%);">1</div>
<div class="t" style="left:1906.1px;top:902.9px;font-size:14.5px;font-weight:400;color:#4b5060;letter-spacing:0.55px;transform:translateX(-100%);">0.0%</div>
<div class="r" style="left:1151px;top:927px;width:766px;height:1px;background:#f4f5f8"></div>
<div class="card" style="left:323px;top:980px;width:1621px;height:635px;border-radius:8px;"></div>
<div class="t" style="left:351.0px;top:1015.4px;font-size:17px;font-weight:700;color:#1b2033;letter-spacing:1.38px;">TRAFFIC STATISTICS</div>
<div class="r" style="left:1665px;top:1006px;width:141px;height:32px;border:1px solid #dfe2e8;border-radius:7px;background:#fff"></div>
<div class="t" style="left:1684.7px;top:1014.9px;font-size:15.5px;font-weight:400;color:#353a48;letter-spacing:0.61px;">March</div>
<svg class="r" style="left:1782px;top:1015px" width="17" height="12" viewBox="0 0 17 12" fill="none" stroke="#1b2033" stroke-width="2.6" stroke-linecap="round" stroke-linejoin="round"><path d="M2 3l6.5 6 6.5-6"/></svg>
<div class="r" style="left:1818px;top:1006px;width:98px;height:32px;border:1px solid #dfe2e8;border-radius:7px;background:#fff"></div>
<div class="t" style="left:1839.0px;top:1014.9px;font-size:15.5px;font-weight:400;color:#353a48;letter-spacing:0.27px;">2026</div>
<svg class="r" style="left:1892px;top:1015px" width="17" height="12" viewBox="0 0 17 12" fill="none" stroke="#1b2033" stroke-width="2.6" stroke-linecap="round" stroke-linejoin="round"><path d="M2 3l6.5 6 6.5-6"/></svg>
<div class="r" style="left:351px;top:1055px;width:177px;height:73px;border:1px solid #e1e5ec;border-radius:9px;background:#f5f7fb;box-shadow:0 1px 2px rgba(20,30,60,.05)"></div>
<div class="r" style="left:371px;top:1083px;width:16px;height:16px;border-radius:4px;background:#9aa3b5"></div>
<div class="t" style="left:402.0px;top:1069.1px;font-size:13.5px;font-weight:700;color:#4b5366;letter-spacing:1.18px;">TOTAL CALLS</div>
<div class="t" style="left:402.0px;top:1088.3px;font-size:25px;font-weight:700;color:#1b2033;letter-spacing:1.06px;">11,653</div>
<div class="r" style="left:544px;top:1055px;width:146px;height:73px;border:1px solid #e1e5ec;border-radius:9px;background:#f5f7fb;box-shadow:0 1px 2px rgba(20,30,60,.05)"></div>
<div class="r" style="left:564px;top:1083px;width:16px;height:16px;border-radius:4px;background:#5fd47a"></div>
<div class="t" style="left:595.0px;top:1069.1px;font-size:13.5px;font-weight:700;color:#4b5366;letter-spacing:1.21px;">SUCCESS</div>
<div class="t" style="left:595.0px;top:1088.3px;font-size:25px;font-weight:700;color:#1b2033;letter-spacing:1.34px;">773</div>
<div class="r" style="left:705px;top:1055px;width:158px;height:73px;border:1px solid #e1e5ec;border-radius:9px;background:#f5f7fb;box-shadow:0 1px 2px rgba(20,30,60,.05)"></div>
<div class="r" style="left:725px;top:1083px;width:16px;height:16px;border-radius:4px;background:#e8666a"></div>
<div class="t" style="left:756.0px;top:1069.1px;font-size:13.5px;font-weight:700;color:#4b5366;letter-spacing:1.28px;">FAILED</div>
<div class="t" style="left:756.0px;top:1088.3px;font-size:25px;font-weight:700;color:#1b2033;letter-spacing:2.01px;">10,880</div>
<div class="r" style="left:878px;top:1055px;width:184px;height:73px;border:1px solid #e1e5ec;border-radius:9px;background:#f5f7fb;box-shadow:0 1px 2px rgba(20,30,60,.05)"></div>
<div class="r" style="left:898px;top:1083px;width:16px;height:16px;border-radius:4px;background:#6ea3ee"></div>
<div class="t" style="left:929.0px;top:1069.1px;font-size:13.5px;font-weight:700;color:#4b5366;letter-spacing:1.64px;">DURATION</div>
<div class="t" style="left:929.0px;top:1088.3px;font-size:25px;font-weight:700;color:#1b2033;letter-spacing:2.01px;">437.80</div>
<div class="t" style="left:1019.0px;top:1098.9px;font-size:12.5px;font-weight:400;color:#b0b5c0;">min</div>
<div class="r" style="left:1077px;top:1055px;width:154px;height:73px;border:1px solid #e1e5ec;border-radius:9px;background:#f5f7fb;box-shadow:0 1px 2px rgba(20,30,60,.05)"></div>
<div class="r" style="left:1097px;top:1083px;width:16px;height:16px;border-radius:4px;background:#c08a3a"></div>
<div class="t" style="left:1128.0px;top:1069.1px;font-size:13.5px;font-weight:700;color:#4b5366;letter-spacing:0.88px;">ACD</div>
<div class="t" style="left:1128.0px;top:1088.3px;font-size:25px;font-weight:700;color:#1b2033;letter-spacing:1.78px;">0.57</div>
<div class="t" style="left:1185.5px;top:1098.9px;font-size:12.5px;font-weight:400;color:#b0b5c0;">min</div>
<div class="r" style="left:1246px;top:1055px;width:119px;height:73px;border:1px solid #e1e5ec;border-radius:9px;background:#f5f7fb;box-shadow:0 1px 2px rgba(20,30,60,.05)"></div>
<div class="r" style="left:1266px;top:1083px;width:16px;height:16px;border-radius:4px;background:#9a55e8"></div>
<div class="t" style="left:1297.0px;top:1069.1px;font-size:13.5px;font-weight:700;color:#4b5366;letter-spacing:1.00px;">ASR</div>
<div class="t" style="left:1297.0px;top:1088.3px;font-size:25px;font-weight:700;color:#1b2033;letter-spacing:2.69px;">20</div>
<div class="t" style="left:1331.0px;top:1098.9px;font-size:12.5px;font-weight:400;color:#b0b5c0;">%</div>
<svg class="r" style="left:0;top:0" width="1984" height="1830" viewBox="0 0 1984 1830"><line x1="452.0" y1="1161.5" x2="452.0" y2="1558.2" stroke="#f1f2f5" stroke-width="1"/><line x1="498.5" y1="1161.5" x2="498.5" y2="1558.2" stroke="#f1f2f5" stroke-width="1"/><line x1="545.0" y1="1161.5" x2="545.0" y2="1558.2" stroke="#f1f2f5" stroke-width="1"/><line x1="591.5" y1="1161.5" x2="591.5" y2="1558.2" stroke="#f1f2f5" stroke-width="1"/><line x1="637.9" y1="1161.5" x2="637.9" y2="1558.2" stroke="#f1f2f5" stroke-width="1"/><line x1="684.4" y1="1161.5" x2="684.4" y2="1558.2" stroke="#f1f2f5" stroke-width="1"/><line x1="730.9" y1="1161.5" x2="730.9" y2="1558.2" stroke="#f1f2f5" stroke-width="1"/><line x1="777.4" y1="1161.5" x2="777.4" y2="1558.2" stroke="#f1f2f5" stroke-width="1"/><line x1="823.9" y1="1161.5" x2="823.9" y2="1558.2" stroke="#f1f2f5" stroke-width="1"/><line x1="870.4" y1="1161.5" x2="870.4" y2="1558.2" stroke="#f1f2f5" stroke-width="1"/><line x1="916.8" y1="1161.5" x2="916.8" y2="1558.2" stroke="#f1f2f5" stroke-width="1"/><line x1="963.3" y1="1161.5" x2="963.3" y2="1558.2" stroke="#f1f2f5" stroke-width="1"/><line x1="1009.8" y1="1161.5" x2="1009.8" y2="1558.2" stroke="#f1f2f5" stroke-width="1"/><line x1="1056.3" y1="1161.5" x2="1056.3" y2="1558.2" stroke="#f1f2f5" stroke-width="1"/><line x1="1102.8" y1="1161.5" x2="1102.8" y2="1558.2" stroke="#f1f2f5" stroke-width="1"/><line x1="1149.2" y1="1161.5" x2="1149.2" y2="1558.2" stroke="#f1f2f5" stroke-width="1"/><line x1="1195.7" y1="1161.5" x2="1195.7" y2="1558.2" stroke="#f1f2f5" stroke-width="1"/><line x1="1242.2" y1="1161.5" x2="1242.2" y2="1558.2" stroke="#f1f2f5" stroke-width="1"/><line x1="1288.7" y1="1161.5" x2="1288.7" y2="1558.2" stroke="#f1f2f5" stroke-width="1"/><line x1="1335.2" y1="1161.5" x2="1335.2" y2="1558.2" stroke="#f1f2f5" stroke-width="1"/><line x1="1381.7" y1="1161.5" x2="1381.7" y2="1558.2" stroke="#f1f2f5" stroke-width="1"/><line x1="1428.2" y1="1161.5" x2="1428.2" y2="1558.2" stroke="#f1f2f5" stroke-width="1"/><line x1="1474.6" y1="1161.5" x2="1474.6" y2="1558.2" stroke="#f1f2f5" stroke-width="1"/><line x1="1521.1" y1="1161.5" x2="1521.1" y2="1558.2" stroke="#f1f2f5" stroke-width="1"/><line x1="1567.6" y1="1161.5" x2="1567.6" y2="1558.2" stroke="#f1f2f5" stroke-width="1"/><line x1="1614.1" y1="1161.5" x2="1614.1" y2="1558.2" stroke="#f1f2f5" stroke-width="1"/><line x1="1660.6" y1="1161.5" x2="1660.6" y2="1558.2" stroke="#f1f2f5" stroke-width="1"/><line x1="1707.0" y1="1161.5" x2="1707.0" y2="1558.2" stroke="#f1f2f5" stroke-width="1"/><line x1="1753.5" y1="1161.5" x2="1753.5" y2="1558.2" stroke="#f1f2f5" stroke-width="1"/><line x1="1800.0" y1="1161.5" x2="1800.0" y2="1558.2" stroke="#f1f2f5" stroke-width="1"/><line x1="1846.5" y1="1161.5" x2="1846.5" y2="1558.2" stroke="#f1f2f5" stroke-width="1"/><line x1="445.0" y1="1551.2" x2="1846.5" y2="1551.2" stroke="#f1f2f5" stroke-width="1"/><line x1="445.0" y1="1486.2" x2="1846.5" y2="1486.2" stroke="#f1f2f5" stroke-width="1"/><line x1="445.0" y1="1421.3" x2="1846.5" y2="1421.3" stroke="#f1f2f5" stroke-width="1"/><line x1="445.0" y1="1356.3" x2="1846.5" y2="1356.3" stroke="#f1f2f5" stroke-width="1"/><line x1="445.0" y1="1291.4" x2="1846.5" y2="1291.4" stroke="#f1f2f5" stroke-width="1"/><line x1="445.0" y1="1226.5" x2="1846.5" y2="1226.5" stroke="#f1f2f5" stroke-width="1"/><line x1="445.0" y1="1161.5" x2="1846.5" y2="1161.5" stroke="#f1f2f5" stroke-width="1"/><line x1="452.0" y1="1161.5" x2="452.0" y2="1551.2" stroke="#e6e8ec" stroke-width="1.2"/><line x1="1847.5" y1="1161.5" x2="1847.5" y2="1551.2" stroke="#e6e8ec" stroke-width="1.2"/><line x1="1847.5" y1="1551.2" x2="1856.5" y2="1551.2" stroke="#e8eaee" stroke-width="1.2"/><line x1="1847.5" y1="1512.2" x2="1856.5" y2="1512.2" stroke="#e8eaee" stroke-width="1.2"/><line x1="1847.5" y1="1473.3" x2="1856.5" y2="1473.3" stroke="#e8eaee" stroke-width="1.2"/><line x1="1847.5" y1="1434.3" x2="1856.5" y2="1434.3" stroke="#e8eaee" stroke-width="1.2"/><line x1="1847.5" y1="1395.3" x2="1856.5" y2="1395.3" stroke="#e8eaee" stroke-width="1.2"/><line x1="1847.5" y1="1356.3" x2="1856.5" y2="1356.3" stroke="#e8eaee" stroke-width="1.2"/><line x1="1847.5" y1="1317.4" x2="1856.5" y2="1317.4" stroke="#e8eaee" stroke-width="1.2"/><line x1="1847.5" y1="1278.4" x2="1856.5" y2="1278.4" stroke="#e8eaee" stroke-width="1.2"/><line x1="1847.5" y1="1239.4" x2="1856.5" y2="1239.4" stroke="#e8eaee" stroke-width="1.2"/><line x1="1847.5" y1="1200.5" x2="1856.5" y2="1200.5" stroke="#e8eaee" stroke-width="1.2"/><line x1="1847.5" y1="1161.5" x2="1856.5" y2="1161.5" stroke="#e8eaee" stroke-width="1.2"/><path d="M452.0 1551.2C470.6 1550.6 479.9 1550.1 498.5 1549.7C517.1 1549.3 526.4 1549.5 545.0 1549.4C563.6 1549.3 572.9 1549.4 591.5 1549.4C610.0 1549.4 619.3 1549.0 637.9 1549.4C656.5 1549.8 665.8 1550.8 684.4 1551.2C703.0 1551.2 712.3 1551.2 730.9 1551.2C749.5 1551.2 758.8 1551.2 777.4 1551.2C796.0 1551.2 805.3 1551.2 823.9 1551.2C842.5 1551.2 851.8 1551.2 870.4 1551.2C888.9 1551.2 898.2 1551.2 916.8 1551.2C935.4 1551.2 944.7 1551.2 963.3 1551.2C981.9 1551.2 991.2 1551.2 1009.8 1551.2C1028.4 1551.2 1037.7 1551.2 1056.3 1551.2C1074.9 1551.2 1084.2 1551.2 1102.8 1551.2C1121.4 1551.2 1130.7 1551.2 1149.2 1551.2C1167.8 1551.2 1177.1 1551.2 1195.7 1551.2C1214.3 1551.2 1223.6 1551.2 1242.2 1551.2C1260.8 1551.2 1270.1 1551.2 1288.7 1551.2C1307.3 1551.2 1316.6 1551.2 1335.2 1551.2C1353.8 1551.2 1363.1 1551.2 1381.7 1551.2C1400.3 1551.2 1409.6 1551.2 1428.2 1551.2C1446.7 1551.2 1456.0 1551.2 1474.6 1551.2C1493.2 1551.2 1502.5 1551.2 1521.1 1551.2C1539.7 1551.2 1549.0 1551.2 1567.6 1551.2C1586.2 1551.2 1595.5 1551.2 1614.1 1551.2C1632.7 1551.2 1642.0 1551.2 1660.6 1551.2C1679.2 1551.2 1688.5 1551.2 1707.0 1551.2C1725.6 1551.2 1734.9 1551.2 1753.5 1551.2C1772.1 1551.2 1781.4 1551.2 1800.0 1551.2C1818.6 1551.2 1827.9 1551.2 1846.5 1551.2" fill="none" stroke="#caa070" stroke-width="2" stroke-dasharray="6 5"/><circle cx="452.0" cy="1551.2" r="4.6" fill="rgba(202,160,112,.25)" stroke="#caa070" stroke-width="2"/><circle cx="498.5" cy="1549.7" r="4.6" fill="rgba(202,160,112,.25)" stroke="#caa070" stroke-width="2"/><circle cx="545.0" cy="1549.4" r="4.6" fill="rgba(202,160,112,.25)" stroke="#caa070" stroke-width="2"/><circle cx="591.5" cy="1549.4" r="4.6" fill="rgba(202,160,112,.25)" stroke="#caa070" stroke-width="2"/><circle cx="637.9" cy="1549.4" r="4.6" fill="rgba(202,160,112,.25)" stroke="#caa070" stroke-width="2"/><circle cx="684.4" cy="1551.2" r="4.6" fill="rgba(202,160,112,.25)" stroke="#caa070" stroke-width="2"/><circle cx="730.9" cy="1551.2" r="4.6" fill="rgba(202,160,112,.25)" stroke="#caa070" stroke-width="2"/><path d="M452.0 1551.2C470.6 1550.4 479.9 1549.7 498.5 1549.2C517.1 1548.7 526.4 1548.9 545.0 1548.7C563.6 1548.5 572.9 1548.3 591.5 1548.2C610.0 1548.1 619.4 1547.6 637.9 1548.2C656.5 1548.8 665.8 1550.6 684.4 1551.2C703.0 1551.2 712.3 1551.2 730.9 1551.2C749.5 1551.2 758.8 1551.2 777.4 1551.2C796.0 1551.2 805.3 1551.2 823.9 1551.2C842.5 1551.2 851.8 1551.2 870.4 1551.2C888.9 1551.2 898.2 1551.2 916.8 1551.2C935.4 1551.2 944.7 1551.2 963.3 1551.2C981.9 1551.2 991.2 1551.2 1009.8 1551.2C1028.4 1551.2 1037.7 1551.2 1056.3 1551.2C1074.9 1551.2 1084.2 1551.2 1102.8 1551.2C1121.4 1551.2 1130.7 1551.2 1149.2 1551.2C1167.8 1551.2 1177.1 1551.2 1195.7 1551.2C1214.3 1551.2 1223.6 1551.2 1242.2 1551.2C1260.8 1551.2 1270.1 1551.2 1288.7 1551.2C1307.3 1551.2 1316.6 1551.2 1335.2 1551.2C1353.8 1551.2 1363.1 1551.2 1381.7 1551.2C1400.3 1551.2 1409.6 1551.2 1428.2 1551.2C1446.7 1551.2 1456.0 1551.2 1474.6 1551.2C1493.2 1551.2 1502.5 1551.2 1521.1 1551.2C1539.7 1551.2 1549.0 1551.2 1567.6 1551.2C1586.2 1551.2 1595.5 1551.2 1614.1 1551.2C1632.7 1551.2 1642.0 1551.2 1660.6 1551.2C1679.2 1551.2 1688.5 1551.2 1707.0 1551.2C1725.6 1551.2 1734.9 1551.2 1753.5 1551.2C1772.1 1551.2 1781.4 1551.2 1800.0 1551.2C1818.6 1551.2 1827.9 1551.2 1846.5 1551.2" fill="none" stroke="#a9b0bd" stroke-width="2"/><circle cx="452.0" cy="1551.2" r="4.6" fill="rgba(169,176,189,.3)" stroke="#a9b0bd" stroke-width="2"/><circle cx="498.5" cy="1549.2" r="4.6" fill="rgba(169,176,189,.3)" stroke="#a9b0bd" stroke-width="2"/><circle cx="545.0" cy="1548.7" r="4.6" fill="rgba(169,176,189,.3)" stroke="#a9b0bd" stroke-width="2"/><circle cx="591.5" cy="1548.2" r="4.6" fill="rgba(169,176,189,.3)" stroke="#a9b0bd" stroke-width="2"/><circle cx="637.9" cy="1548.2" r="4.6" fill="rgba(169,176,189,.3)" stroke="#a9b0bd" stroke-width="2"/><circle cx="684.4" cy="1551.2" r="4.6" fill="rgba(169,176,189,.3)" stroke="#a9b0bd" stroke-width="2"/><circle cx="730.9" cy="1551.2" r="4.6" fill="rgba(169,176,189,.3)" stroke="#a9b0bd" stroke-width="2"/><path d="M452.0 1551.2C470.6 1549.4 479.9 1547.9 498.5 1546.7C517.0 1545.5 526.4 1546.0 545.0 1545.0C563.6 1544.0 572.8 1542.4 591.5 1541.5C610.0 1540.6 619.6 1538.7 637.9 1540.6C656.8 1542.6 665.6 1549.1 684.4 1551.2C702.8 1551.2 712.3 1551.2 730.9 1551.2C749.5 1551.2 758.8 1551.2 777.4 1551.2C796.0 1551.2 805.3 1551.2 823.9 1551.2C842.5 1551.2 851.8 1551.2 870.4 1551.2C888.9 1551.2 898.2 1551.2 916.8 1551.2C935.4 1551.2 944.7 1551.2 963.3 1551.2C981.9 1551.2 991.2 1551.2 1009.8 1551.2C1028.4 1551.2 1037.7 1551.2 1056.3 1551.2C1074.9 1551.2 1084.2 1551.2 1102.8 1551.2C1121.4 1551.2 1130.7 1551.2 1149.2 1551.2C1167.8 1551.2 1177.1 1551.2 1195.7 1551.2C1214.3 1551.2 1223.6 1551.2 1242.2 1551.2C1260.8 1551.2 1270.1 1551.2 1288.7 1551.2C1307.3 1551.2 1316.6 1551.2 1335.2 1551.2C1353.8 1551.2 1363.1 1551.2 1381.7 1551.2C1400.3 1551.2 1409.6 1551.2 1428.2 1551.2C1446.7 1551.2 1456.0 1551.2 1474.6 1551.2C1493.2 1551.2 1502.5 1551.2 1521.1 1551.2C1539.7 1551.2 1549.0 1551.2 1567.6 1551.2C1586.2 1551.2 1595.5 1551.2 1614.1 1551.2C1632.7 1551.2 1642.0 1551.2 1660.6 1551.2C1679.2 1551.2 1688.5 1551.2 1707.0 1551.2C1725.6 1551.2 1734.9 1551.2 1753.5 1551.2C1772.1 1551.2 1781.4 1551.2 1800.0 1551.2C1818.6 1551.2 1827.9 1551.2 1846.5 1551.2" fill="none" stroke="#5b9be8" stroke-width="2.2"/><circle cx="452.0" cy="1551.2" r="4.6" fill="rgba(91,155,232,.3)" stroke="#5b9be8" stroke-width="2"/><circle cx="498.5" cy="1546.7" r="4.6" fill="rgba(91,155,232,.3)" stroke="#5b9be8" stroke-width="2"/><circle cx="545.0" cy="1545.0" r="4.6" fill="rgba(91,155,232,.3)" stroke="#5b9be8" stroke-width="2"/><circle cx="591.5" cy="1541.5" r="4.6" fill="rgba(91,155,232,.3)" stroke="#5b9be8" stroke-width="2"/><circle cx="637.9" cy="1540.6" r="4.6" fill="rgba(91,155,232,.3)" stroke="#5b9be8" stroke-width="2"/><circle cx="684.4" cy="1551.2" r="4.6" fill="rgba(91,155,232,.3)" stroke="#5b9be8" stroke-width="2"/><circle cx="730.9" cy="1551.2" r="4.6" fill="rgba(91,155,232,.3)" stroke="#5b9be8" stroke-width="2"/><path d="M452.0 1551.2C470.6 1488.9 481.3 1458.1 498.5 1395.4C518.5 1322.0 515.1 1268.5 545.0 1211.0C552.3 1196.9 573.1 1212.8 591.5 1216.2C610.3 1219.6 633.0 1210.9 637.9 1228.0C670.2 1339.2 652.2 1425.1 684.4 1537.0C689.4 1551.2 711.9 1548.3 730.9 1551.2C749.1 1551.2 758.8 1551.2 777.4 1551.2C796.0 1551.2 805.3 1551.2 823.9 1551.2C842.5 1551.2 851.8 1551.2 870.4 1551.2C888.9 1551.2 898.2 1551.2 916.8 1551.2C935.4 1551.2 944.7 1551.2 963.3 1551.2C981.9 1551.2 991.2 1551.2 1009.8 1551.2C1028.4 1551.2 1037.7 1551.2 1056.3 1551.2C1074.9 1551.2 1084.2 1551.2 1102.8 1551.2C1121.4 1551.2 1130.7 1551.2 1149.2 1551.2C1167.8 1551.2 1177.1 1551.2 1195.7 1551.2C1214.3 1551.2 1223.6 1551.2 1242.2 1551.2C1260.8 1551.2 1270.1 1551.2 1288.7 1551.2C1307.3 1551.2 1316.6 1551.2 1335.2 1551.2C1353.8 1551.2 1363.1 1551.2 1381.7 1551.2C1400.3 1551.2 1409.6 1551.2 1428.2 1551.2C1446.7 1551.2 1456.0 1551.2 1474.6 1551.2C1493.2 1551.2 1502.5 1551.2 1521.1 1551.2C1539.7 1551.2 1549.0 1551.2 1567.6 1551.2C1586.2 1551.2 1595.5 1551.2 1614.1 1551.2C1632.7 1551.2 1642.0 1551.2 1660.6 1551.2C1679.2 1551.2 1688.5 1551.2 1707.0 1551.2C1725.6 1551.2 1734.9 1551.2 1753.5 1551.2C1772.1 1551.2 1781.4 1551.2 1800.0 1551.2C1818.6 1551.2 1827.9 1551.2 1846.5 1551.2" fill="none" stroke="#e0625e" stroke-width="2.2"/><circle cx="452.0" cy="1551.2" r="4.6" fill="rgba(224,98,94,.25)" stroke="#e0625e" stroke-width="2"/><circle cx="498.5" cy="1395.4" r="4.6" fill="rgba(224,98,94,.25)" stroke="#e0625e" stroke-width="2"/><circle cx="545.0" cy="1211.0" r="4.6" fill="rgba(224,98,94,.25)" stroke="#e0625e" stroke-width="2"/><circle cx="591.5" cy="1216.2" r="4.6" fill="rgba(224,98,94,.25)" stroke="#e0625e" stroke-width="2"/><circle cx="637.9" cy="1228.0" r="4.6" fill="rgba(224,98,94,.25)" stroke="#e0625e" stroke-width="2"/><circle cx="684.4" cy="1537.0" r="4.6" fill="rgba(224,98,94,.25)" stroke="#e0625e" stroke-width="2"/><circle cx="730.9" cy="1551.2" r="4.6" fill="rgba(224,98,94,.25)" stroke="#e0625e" stroke-width="2"/><path d="M452.0 1162.5C459.0 1210.3 486.3 1438.5 498.5 1481.5C500.3 1487.8 538.0 1491.2 545.0 1491.4C551.9 1491.6 584.4 1484.8 591.5 1484.3C598.4 1483.8 631.0 1485.6 637.9 1484.9C645.0 1484.2 679.6 1471.8 684.4 1475.3C693.5 1481.8 721.7 1543.7 730.9 1551.2C735.7 1551.2 770.4 1551.2 777.4 1551.2C784.4 1551.2 816.9 1551.2 823.9 1551.2C830.8 1551.2 863.4 1551.2 870.4 1551.2C877.3 1551.2 909.9 1551.2 916.8 1551.2C923.8 1551.2 956.3 1551.2 963.3 1551.2C970.3 1551.2 1002.8 1551.2 1009.8 1551.2C1016.8 1551.2 1049.3 1551.2 1056.3 1551.2C1063.3 1551.2 1095.8 1551.2 1102.8 1551.2C1109.7 1551.2 1142.3 1551.2 1149.2 1551.2C1156.2 1551.2 1188.8 1551.2 1195.7 1551.2C1202.7 1551.2 1235.2 1551.2 1242.2 1551.2C1249.2 1551.2 1281.7 1551.2 1288.7 1551.2C1295.7 1551.2 1328.2 1551.2 1335.2 1551.2C1342.2 1551.2 1374.7 1551.2 1381.7 1551.2C1388.6 1551.2 1421.2 1551.2 1428.2 1551.2C1435.1 1551.2 1467.7 1551.2 1474.6 1551.2C1481.6 1551.2 1514.1 1551.2 1521.1 1551.2C1528.1 1551.2 1560.6 1551.2 1567.6 1551.2C1574.6 1551.2 1607.1 1551.2 1614.1 1551.2C1621.1 1551.2 1653.6 1551.2 1660.6 1551.2C1667.5 1551.2 1700.1 1551.2 1707.0 1551.2C1714.0 1551.2 1746.6 1551.2 1753.5 1551.2C1760.5 1551.2 1793.0 1551.2 1800.0 1551.2C1807.0 1551.2 1839.5 1551.2 1846.5 1551.2" fill="none" stroke="#7f5ce8" stroke-width="2" stroke-dasharray="5 5"/><circle cx="452.0" cy="1162.5" r="4.6" fill="rgba(139,92,246,.2)" stroke="#7f5ce8" stroke-width="2"/><circle cx="498.5" cy="1481.5" r="4.6" fill="rgba(139,92,246,.2)" stroke="#7f5ce8" stroke-width="2"/><circle cx="545.0" cy="1491.4" r="4.6" fill="rgba(139,92,246,.2)" stroke="#7f5ce8" stroke-width="2"/><circle cx="591.5" cy="1484.3" r="4.6" fill="rgba(139,92,246,.2)" stroke="#7f5ce8" stroke-width="2"/><circle cx="637.9" cy="1484.9" r="4.6" fill="rgba(139,92,246,.2)" stroke="#7f5ce8" stroke-width="2"/><circle cx="684.4" cy="1475.3" r="4.6" fill="rgba(139,92,246,.2)" stroke="#7f5ce8" stroke-width="2"/><circle cx="730.9" cy="1551.2" r="4.6" fill="rgba(139,92,246,.2)" stroke="#7f5ce8" stroke-width="2"/><path d="M452.0 1551.2C470.6 1547.6 479.7 1544.4 498.5 1542.3C516.9 1540.2 526.4 1542.2 545.0 1540.6C563.6 1539.0 572.8 1535.7 591.5 1534.4C610.0 1533.1 619.9 1530.6 637.9 1533.9C657.1 1537.4 665.2 1547.6 684.4 1551.2C702.4 1551.2 712.3 1551.2 730.9 1551.2C749.5 1551.2 758.8 1551.2 777.4 1551.2C796.0 1551.2 805.3 1551.2 823.9 1551.2C842.5 1551.2 851.8 1551.2 870.4 1551.2C888.9 1551.2 898.2 1551.2 916.8 1551.2C935.4 1551.2 944.7 1551.2 963.3 1551.2C981.9 1551.2 991.2 1551.2 1009.8 1551.2C1028.4 1551.2 1037.7 1551.2 1056.3 1551.2C1074.9 1551.2 1084.2 1551.2 1102.8 1551.2C1121.4 1551.2 1130.7 1551.2 1149.2 1551.2C1167.8 1551.2 1177.1 1551.2 1195.7 1551.2C1214.3 1551.2 1223.6 1551.2 1242.2 1551.2C1260.8 1551.2 1270.1 1551.2 1288.7 1551.2C1307.3 1551.2 1316.6 1551.2 1335.2 1551.2C1353.8 1551.2 1363.1 1551.2 1381.7 1551.2C1400.3 1551.2 1409.6 1551.2 1428.2 1551.2C1446.7 1551.2 1456.0 1551.2 1474.6 1551.2C1493.2 1551.2 1502.5 1551.2 1521.1 1551.2C1539.7 1551.2 1549.0 1551.2 1567.6 1551.2C1586.2 1551.2 1595.5 1551.2 1614.1 1551.2C1632.7 1551.2 1642.0 1551.2 1660.6 1551.2C1679.2 1551.2 1688.5 1551.2 1707.0 1551.2C1725.6 1551.2 1734.9 1551.2 1753.5 1551.2C1772.1 1551.2 1781.4 1551.2 1800.0 1551.2C1818.6 1551.2 1827.9 1551.2 1846.5 1551.2" fill="none" stroke="#62c474" stroke-width="2.2"/><circle cx="452.0" cy="1551.2" r="4.6" fill="#93d69e" stroke="#62c474" stroke-width="2"/><circle cx="498.5" cy="1542.3" r="4.6" fill="#93d69e" stroke="#62c474" stroke-width="2"/><circle cx="545.0" cy="1540.6" r="4.6" fill="#93d69e" stroke="#62c474" stroke-width="2"/><circle cx="591.5" cy="1534.4" r="4.6" fill="#93d69e" stroke="#62c474" stroke-width="2"/><circle cx="637.9" cy="1533.9" r="4.6" fill="#93d69e" stroke="#62c474" stroke-width="2"/><circle cx="684.4" cy="1551.2" r="4.6" fill="#93d69e" stroke="#62c474" stroke-width="2"/><circle cx="730.9" cy="1551.2" r="4.6" fill="#93d69e" stroke="#62c474" stroke-width="2"/><circle cx="777.4" cy="1551.2" r="4.6" fill="#93d69e" stroke="#62c474" stroke-width="2"/><circle cx="823.9" cy="1551.2" r="4.6" fill="#93d69e" stroke="#62c474" stroke-width="2"/><circle cx="870.4" cy="1551.2" r="4.6" fill="#93d69e" stroke="#62c474" stroke-width="2"/><circle cx="916.8" cy="1551.2" r="4.6" fill="#93d69e" stroke="#62c474" stroke-width="2"/><circle cx="963.3" cy="1551.2" r="4.6" fill="#93d69e" stroke="#62c474" stroke-width="2"/><circle cx="1009.8" cy="1551.2" r="4.6" fill="#93d69e" stroke="#62c474" stroke-width="2"/><circle cx="1056.3" cy="1551.2" r="4.6" fill="#93d69e" stroke="#62c474" stroke-width="2"/><circle cx="1102.8" cy="1551.2" r="4.6" fill="#93d69e" stroke="#62c474" stroke-width="2"/><circle cx="1149.2" cy="1551.2" r="4.6" fill="#93d69e" stroke="#62c474" stroke-width="2"/><circle cx="1195.7" cy="1551.2" r="4.6" fill="#93d69e" stroke="#62c474" stroke-width="2"/><circle cx="1242.2" cy="1551.2" r="4.6" fill="#93d69e" stroke="#62c474" stroke-width="2"/><circle cx="1288.7" cy="1551.2" r="4.6" fill="#93d69e" stroke="#62c474" stroke-width="2"/><circle cx="1335.2" cy="1551.2" r="4.6" fill="#93d69e" stroke="#62c474" stroke-width="2"/><circle cx="1381.7" cy="1551.2" r="4.6" fill="#93d69e" stroke="#62c474" stroke-width="2"/><circle cx="1428.2" cy="1551.2" r="4.6" fill="#93d69e" stroke="#62c474" stroke-width="2"/><circle cx="1474.6" cy="1551.2" r="4.6" fill="#93d69e" stroke="#62c474" stroke-width="2"/><circle cx="1521.1" cy="1551.2" r="4.6" fill="#93d69e" stroke="#62c474" stroke-width="2"/><circle cx="1567.6" cy="1551.2" r="4.6" fill="#93d69e" stroke="#62c474" stroke-width="2"/><circle cx="1614.1" cy="1551.2" r="4.6" fill="#93d69e" stroke="#62c474" stroke-width="2"/><circle cx="1660.6" cy="1551.2" r="4.6" fill="#93d69e" stroke="#62c474" stroke-width="2"/><circle cx="1707.0" cy="1551.2" r="4.6" fill="#93d69e" stroke="#62c474" stroke-width="2"/><circle cx="1753.5" cy="1551.2" r="4.6" fill="#93d69e" stroke="#62c474" stroke-width="2"/><circle cx="1800.0" cy="1551.2" r="4.6" fill="#93d69e" stroke="#62c474" stroke-width="2"/><circle cx="1846.5" cy="1551.2" r="4.6" fill="#93d69e" stroke="#62c474" stroke-width="2"/></svg>
<div class="t" style="left:437.0px;top:1544.4px;font-size:14px;font-weight:400;color:#5d6270;transform:translateX(-100%);">0</div>
<div class="t" style="left:437.0px;top:1479.5px;font-size:14px;font-weight:400;color:#5d6270;transform:translateX(-100%);">50,000</div>
<div class="t" style="left:437.0px;top:1414.5px;font-size:14px;font-weight:400;color:#5d6270;transform:translateX(-100%);">100,000</div>
<div class="t" style="left:437.0px;top:1349.6px;font-size:14px;font-weight:400;color:#5d6270;transform:translateX(-100%);">150,000</div>
<div class="t" style="left:437.0px;top:1284.6px;font-size:14px;font-weight:400;color:#5d6270;transform:translateX(-100%);">200,000</div>
<div class="t" style="left:437.0px;top:1219.7px;font-size:14px;font-weight:400;color:#5d6270;transform:translateX(-100%);">250,000</div>
<div class="t" style="left:437.0px;top:1154.7px;font-size:14px;font-weight:400;color:#5d6270;transform:translateX(-100%);">300,000</div>
<div class="t" style="left:1862.0px;top:1544.4px;font-size:14px;font-weight:400;color:#7c62d6;">0</div>
<div class="t" style="left:1862.0px;top:1505.5px;font-size:14px;font-weight:400;color:#7c62d6;">10</div>
<div class="t" style="left:1862.0px;top:1466.5px;font-size:14px;font-weight:400;color:#7c62d6;">20</div>
<div class="t" style="left:1862.0px;top:1427.5px;font-size:14px;font-weight:400;color:#7c62d6;">30</div>
<div class="t" style="left:1862.0px;top:1388.6px;font-size:14px;font-weight:400;color:#7c62d6;">40</div>
<div class="t" style="left:1862.0px;top:1349.6px;font-size:14px;font-weight:400;color:#7c62d6;">50</div>
<div class="t" style="left:1862.0px;top:1310.6px;font-size:14px;font-weight:400;color:#7c62d6;">60</div>
<div class="t" style="left:1862.0px;top:1271.7px;font-size:14px;font-weight:400;color:#7c62d6;">70</div>
<div class="t" style="left:1862.0px;top:1232.7px;font-size:14px;font-weight:400;color:#7c62d6;">80</div>
<div class="t" style="left:1862.0px;top:1193.7px;font-size:14px;font-weight:400;color:#7c62d6;">90</div>
<div class="t" style="left:1862.0px;top:1154.7px;font-size:14px;font-weight:400;color:#7c62d6;">100</div>
<div class="t" style="left:452.0px;top:1568.4px;font-size:14px;font-weight:400;color:#676c78;transform:translateX(-50%);">1</div>
<div class="t" style="left:498.5px;top:1568.4px;font-size:14px;font-weight:400;color:#676c78;transform:translateX(-50%);">2</div>
<div class="t" style="left:545.0px;top:1568.4px;font-size:14px;font-weight:400;color:#676c78;transform:translateX(-50%);">3</div>
<div class="t" style="left:591.5px;top:1568.4px;font-size:14px;font-weight:400;color:#676c78;transform:translateX(-50%);">4</div>
<div class="t" style="left:637.9px;top:1568.4px;font-size:14px;font-weight:400;color:#676c78;transform:translateX(-50%);">5</div>
<div class="t" style="left:684.4px;top:1568.4px;font-size:14px;font-weight:400;color:#676c78;transform:translateX(-50%);">6</div>
<div class="t" style="left:730.9px;top:1568.4px;font-size:14px;font-weight:400;color:#676c78;transform:translateX(-50%);">7</div>
<div class="t" style="left:777.4px;top:1568.4px;font-size:14px;font-weight:400;color:#676c78;transform:translateX(-50%);">8</div>
<div class="t" style="left:823.9px;top:1568.4px;font-size:14px;font-weight:400;color:#676c78;transform:translateX(-50%);">9</div>
<div class="t" style="left:870.4px;top:1568.4px;font-size:14px;font-weight:400;color:#676c78;transform:translateX(-50%);">10</div>
<div class="t" style="left:916.8px;top:1568.4px;font-size:14px;font-weight:400;color:#676c78;transform:translateX(-50%);">11</div>
<div class="t" style="left:963.3px;top:1568.4px;font-size:14px;font-weight:400;color:#676c78;transform:translateX(-50%);">12</div>
<div class="t" style="left:1009.8px;top:1568.4px;font-size:14px;font-weight:400;color:#676c78;transform:translateX(-50%);">13</div>
<div class="t" style="left:1056.3px;top:1568.4px;font-size:14px;font-weight:400;color:#676c78;transform:translateX(-50%);">14</div>
<div class="t" style="left:1102.8px;top:1568.4px;font-size:14px;font-weight:400;color:#676c78;transform:translateX(-50%);">15</div>
<div class="t" style="left:1149.2px;top:1568.4px;font-size:14px;font-weight:400;color:#676c78;transform:translateX(-50%);">16</div>
<div class="t" style="left:1195.7px;top:1568.4px;font-size:14px;font-weight:400;color:#676c78;transform:translateX(-50%);">17</div>
<div class="t" style="left:1242.2px;top:1568.4px;font-size:14px;font-weight:400;color:#676c78;transform:translateX(-50%);">18</div>
<div class="t" style="left:1288.7px;top:1568.4px;font-size:14px;font-weight:400;color:#676c78;transform:translateX(-50%);">19</div>
<div class="t" style="left:1335.2px;top:1568.4px;font-size:14px;font-weight:400;color:#676c78;transform:translateX(-50%);">20</div>
<div class="t" style="left:1381.7px;top:1568.4px;font-size:14px;font-weight:400;color:#676c78;transform:translateX(-50%);">21</div>
<div class="t" style="left:1428.2px;top:1568.4px;font-size:14px;font-weight:400;color:#676c78;transform:translateX(-50%);">22</div>
<div class="t" style="left:1474.6px;top:1568.4px;font-size:14px;font-weight:400;color:#676c78;transform:translateX(-50%);">23</div>
<div class="t" style="left:1521.1px;top:1568.4px;font-size:14px;font-weight:400;color:#676c78;transform:translateX(-50%);">24</div>
<div class="t" style="left:1567.6px;top:1568.4px;font-size:14px;font-weight:400;color:#676c78;transform:translateX(-50%);">25</div>
<div class="t" style="left:1614.1px;top:1568.4px;font-size:14px;font-weight:400;color:#676c78;transform:translateX(-50%);">26</div>
<div class="t" style="left:1660.6px;top:1568.4px;font-size:14px;font-weight:400;color:#676c78;transform:translateX(-50%);">27</div>
<div class="t" style="left:1707.0px;top:1568.4px;font-size:14px;font-weight:400;color:#676c78;transform:translateX(-50%);">28</div>
<div class="t" style="left:1753.5px;top:1568.4px;font-size:14px;font-weight:400;color:#676c78;transform:translateX(-50%);">29</div>
<div class="t" style="left:1800.0px;top:1568.4px;font-size:14px;font-weight:400;color:#676c78;transform:translateX(-50%);">30</div>
<div class="t" style="left:1846.5px;top:1568.4px;font-size:14px;font-weight:400;color:#676c78;transform:translateX(-50%);">31</div>
<div class="t" style="left:364.5px;top:1356.7px;font-size:13.5px;color:#a0a5b2;transform:translate(-50%,-50%) rotate(-90deg)">Calls / Min</div>
<div class="t" style="left:1904px;top:1356.5px;font-size:13.5px;color:#7c62d6;transform:translate(-50%,-50%) rotate(90deg)">ACD(min) / ASR</div>
<div class="card" style="left:323px;top:1642px;width:798px;height:300px;border-radius:8px;"></div>
<div class="t" style="left:350.2px;top:1670.1px;font-size:18px;font-weight:700;color:#1b2033;letter-spacing:0.18px;">Server Resources</div>
<div class="t" style="left:350.2px;top:1708.9px;font-size:17px;font-weight:700;color:#1b2033;letter-spacing:-0.40px;">CPU</div>
<div class="t" style="left:1092.2px;top:1709.8px;font-size:16px;font-weight:400;color:#4b5060;letter-spacing:-0.52px;transform:translateX(-100%);">16.1%</div>
<div class="r" style="left:352px;top:1732px;width:741px;height:9px;background:#eef1f5;border:1px solid #e2e6ec;border-radius:5px"></div>
<div class="r" style="left:352px;top:1732px;width:119px;height:9px;background:#2d56b3;border-radius:5px"></div>
<div class="t" style="left:350.2px;top:1749.5px;font-size:15.5px;font-weight:400;color:#a3a8b3;letter-spacing:0.21px;">Load: 1.54150390625 | 12 cores</div>
<div class="t" style="left:350.2px;top:1786.2px;font-size:17px;font-weight:700;color:#1b2033;letter-spacing:-0.76px;">RAM</div>
<div class="t" style="left:1092.7px;top:1787.1px;font-size:16px;font-weight:400;color:#4b5060;letter-spacing:0.03px;transform:translateX(-100%);">25.3%</div>
<div class="r" style="left:352px;top:1810px;width:741px;height:9px;background:#eef1f5;border:1px solid #e2e6ec;border-radius:5px"></div>
<div class="r" style="left:352px;top:1810px;width:187px;height:9px;background:#2d56b3;border-radius:5px"></div>
<div class="t" style="left:352.0px;top:1826.9px;font-size:15.5px;font-weight:400;color:#a3a8b3;letter-spacing:0.50px;">4096 / 16192 MB</div>
<div class="card" style="left:1145px;top:1642px;width:799px;height:300px;border-radius:8px;"></div>
<div class="t" style="left:1174.9px;top:1670.8px;font-size:18px;font-weight:700;color:#1b2033;letter-spacing:0.24px;">Services Status</div>
<div class="r" style="left:1174px;top:1708px;width:742px;height:200px;border:1px solid #e1e5ec;border-radius:11px;background:#f5f7fb"></div>
<svg class="r" style="left:1199px;top:1730px" width="20" height="20" viewBox="0 0 24 24"><path d="M6.6 10.8a15 15 0 0 0 6.6 6.6l2.2-2.2a1 1 0 0 1 1-.25 11.4 11.4 0 0 0 3.6.57 1 1 0 0 1 1 1V20a1 1 0 0 1-1 1A17 17 0 0 1 3 4a1 1 0 0 1 1-1h3.5a1 1 0 0 1 1 1c0 1.25.2 2.45.57 3.57a1 1 0 0 1-.25 1z" fill="#2d56b3"/></svg>
<div class="t" style="left:1233.6px;top:1732.4px;font-size:18px;font-weight:700;color:#1b2033;letter-spacing:0.26px;">Current Calls</div>
<div class="t" style="left:1197.4px;top:1770.7px;font-size:37px;font-weight:700;color:#2d56b3;letter-spacing:2.13px;">175</div>
<div class="t" style="left:1272.7px;top:1785.9px;font-size:19px;font-weight:400;color:#6b7080;letter-spacing:0.27px;">/ 1,000 calls</div>
<div class="r" style="left:1198px;top:1826px;width:694px;height:10px;background:#e6e9ef;border-radius:5px"></div>
<div class="r" style="left:1198px;top:1826px;width:126px;height:10px;background:#2d56b3;border-radius:5px"></div>
<div class="r" style="left:1982px;top:78px;width:2px;height:1830px;background:#dde2ee"></div>
<svg class="r" style="left:1964px;top:1810px" width="20" height="20"><path d="M20 6.5A14 14 0 0 1 10 20H20z" fill="#111"/></svg>
<div class="r" style="left:0px;top:0px;width:1984px;height:4px;background:#3d3d3d"></div>
<div class="r" style="left:0px;top:4px;width:1984px;height:2px;background:#4a4c48"></div>
<div class="r" style="left:0px;top:0px;width:2px;height:6px;background:#6e6f6c"></div>
<div class="r" style="left:0px;top:6px;width:2px;height:1790px;background:rgba(255,255,255,.18)"></div>
<svg class="r" style="left:0;top:1790px" width="40" height="40"><path d="M0 6A48 48 0 0 0 14 40H0z" fill="#111"/><path d="M1 6A48 48 0 0 0 15 40" fill="none" stroke="#4a4d68" stroke-width="2"/></svg>
</body></html>
